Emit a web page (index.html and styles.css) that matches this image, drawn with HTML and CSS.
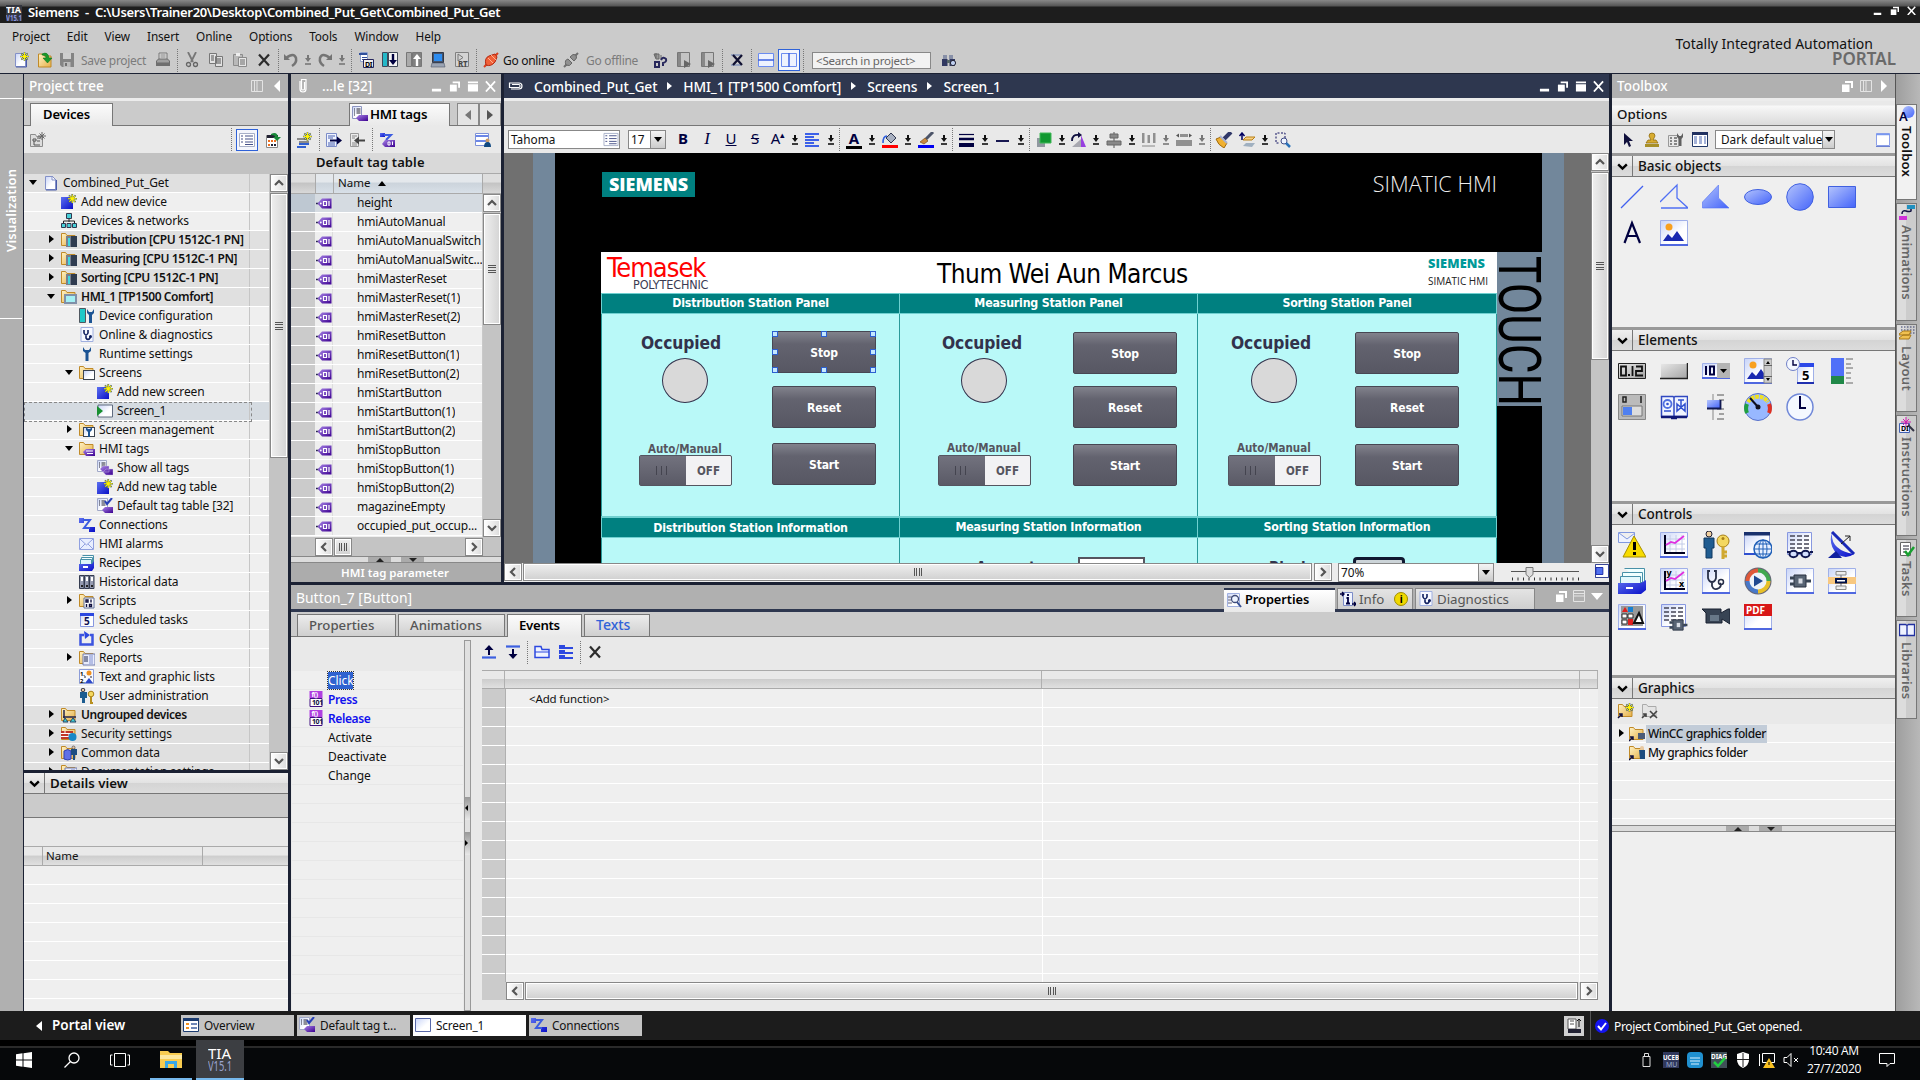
FILE: index.html
```html
<!DOCTYPE html>
<html lang="en">
<head>
<meta charset="utf-8">
<title>Siemens - Combined_Put_Get</title>
<link rel="stylesheet" href="styles.css">
</head>
<body>
<svg class="defs" width="0" height="0">
<defs>
<linearGradient id="gb" x1="0" y1="0" x2="1" y2="1"><stop offset="0" stop-color="#b4c4fc"/><stop offset="1" stop-color="#4464fa"/></linearGradient>
<linearGradient id="gd" x1="0" y1="0" x2="1" y2="1"><stop offset="0" stop-color="#c8d4f8"/><stop offset=".6" stop-color="#fff"/></linearGradient>
<linearGradient id="gf" x1="0" y1="0" x2="1" y2="1"><stop offset="0" stop-color="#fff2c4"/><stop offset="1" stop-color="#e6b048"/></linearGradient>
<linearGradient id="gs" x1="0" y1="0" x2="1" y2="1"><stop offset="0" stop-color="#5c70f0"/><stop offset="1" stop-color="#0a10c8"/></linearGradient>
<linearGradient id="gp" x1="0" y1="0" x2="1" y2="1"><stop offset="0" stop-color="#a884e8"/><stop offset="1" stop-color="#3c0090"/></linearGradient>
<linearGradient id="gg" x1="0" y1="0" x2="1" y2="1"><stop offset="0" stop-color="#e8e8e8"/><stop offset="1" stop-color="#a4a4a4"/></linearGradient>
</defs>
<symbol id="star" viewBox="0 0 10 10"><path d="M5 0v10M0 5h10M1.5 1.5l7 7M8.500 1.500l-7 7" stroke="#47616b" stroke-width="1.800"/><path d="M5 .5v9M.5 5h9M2 2l6 6M8 2l-6 6" stroke="#fff200" stroke-width="1.100"/></symbol>
<symbol id="doc" viewBox="0 0 16 16"><path d="M2.500 1.500h7l3 3v10h-10z" fill="url(#gd)" stroke="#8491c8"/><path d="M9 1l4 4H9z" fill="#fff" stroke="#8491c8"/><path d="M13.500 5v10H3" stroke="#4a5ca8" fill="none"/></symbol>
<symbol id="new" viewBox="0 0 16 16"><use href="#doc"/><use href="#star" x="7" y="0" width="9" height="9"/></symbol>
<symbol id="folder" viewBox="0 0 16 16"><path d="M.5 13.500v-12h4l1.500 2h8v10z" fill="url(#gf)" stroke="#c08a28"/></symbol>
<symbol id="open" viewBox="0 0 16 16"><path d="M1.500 15V2h4l2 2H14v11z" fill="url(#gf)" stroke="#c08a28"/><path d="M5 2q6-3 7 4h3l-4.500 5L6 6h3q0-3-4-3z" fill="#1a9a2a" stroke="#0a6a18" stroke-width=".5"/></symbol>
<symbol id="save" viewBox="0 0 16 16"><path d="M1 1h14v14H3l-2-2z" fill="#848484"/><path d="M4 1h8v6H4z" fill="#cecece"/><path d="M4.500 10h7v5h-7z" fill="#bbb"/><path d="M6 11h2v3H6z" fill="#707070"/></symbol>
<symbol id="print" viewBox="0 0 16 16"><path d="M4 1h8v7H4z" fill="#ddd" stroke="#777"/><path d="M5.500 3h5M5.500 5h5" stroke="#888"/><path d="M1.500 9l2-2h9l2 2v2h-13z" fill="#a0a0a0" stroke="#6c6c6c"/><path d="M1 11h14v3H1z" fill="#6f6f6f"/></symbol>
<symbol id="cut" viewBox="0 0 16 16"><path d="M4 0l5 10M12 0L7 10" stroke="#777" stroke-width="1.800"/><circle cx="4.500" cy="12.500" r="2" fill="none" stroke="#666" stroke-width="1.300"/><circle cx="11.500" cy="12.500" r="2" fill="none" stroke="#666" stroke-width="1.300"/></symbol>
<symbol id="copy" viewBox="0 0 16 16"><path d="M1.500 1.500h7v10h-7zM7.500 4.500h7v10h-7z" fill="#e2e2e2" stroke="#777"/><path d="M3 4h3M3 6h3M3 8h3M9 7h4M9 9h4M9 11h4" stroke="#555"/></symbol>
<symbol id="paste" viewBox="0 0 16 16"><path d="M1.500 2.500h9v11h-9z" fill="#b9b9b9" stroke="#8c8c8c"/><path d="M4 1h4v3H4z" fill="#eee"/><path d="M6.500 5.500h8v9h-8z" fill="#e6e6e6" stroke="#8a8a8a"/><path d="M8 8h5M8 10h5M8 12h5" stroke="#666"/></symbol>
<symbol id="xx" viewBox="0 0 16 16"><path d="M3 2.500l10 11M13 2.500L3 13.500" stroke="#2c2c2c" stroke-width="2.200"/></symbol>
<symbol id="undo" viewBox="0 0 16 16"><path d="M1 2v6h6z" fill="#747474"/><path d="M3 6q8-6 10 0q1 5-4 8" fill="none" stroke="#747474" stroke-width="2.500"/></symbol>
<symbol id="dd" viewBox="0 0 8 12"><path d="M4 1v4" stroke="currentColor" stroke-width="2"/><path d="M1 4h6L4 8z" fill="currentColor"/><path d="M1 10h6" stroke="currentColor" stroke-width="1.600"/></symbol>
<symbol id="dl" viewBox="0 0 16 16"><path d="M.5 .5h5v14h-5z" fill="#24b8c8" stroke="#404858"/><path d="M6.500 .5h9v14h-9z" fill="#f4f4f4" stroke="#404858"/><path d="M11 2v8" stroke="#000040" stroke-width="2.400"/><path d="M7 8h8l-4 5z" fill="#000040"/></symbol>
<symbol id="ul" viewBox="0 0 16 16"><path d="M.5 .5h5v14h-5z" fill="#aaa" stroke="#777"/><path d="M6.500 .5h9v14h-9z" fill="#808080" stroke="#777"/><path d="M11 6v8" stroke="#fff" stroke-width="2.400"/><path d="M7 7h8l-4-5z" fill="#fff"/></symbol>
<symbol id="pc" viewBox="0 0 16 16"><path d="M2.500 .5h11v10h-11z" fill="#46546c" stroke="#303848"/><path d="M4 2h8v7H4z" fill="#2c8cf0"/><path d="M2 11h12l1 4H1z" fill="#9aa4b4" stroke="#505868" stroke-width=".6"/></symbol>
<symbol id="online" viewBox="0 0 16 16"><path d="M1 15l3-3M12 4l3-3" stroke="#d84020" stroke-width="2"/><path d="M3 13Q1 6 6 4l6-2 2 3-2 5q-4 5-9 3z" fill="#f06038" stroke="#b42810"/><path d="M5 6l5 5M8 3l5 5" stroke="#ffb090"/></symbol>
<symbol id="offline" viewBox="0 0 16 16"><path d="M1 15l3-3M12 4l3-3" stroke="#707070" stroke-width="2"/><path d="M3 13q-2-5 2-6l4 4q-2 4-6 2zM7 5q3-4 6-2 2 3-2 6z" fill="#909090" stroke="#666"/></symbol>
<symbol id="acc" viewBox="0 0 16 16"><path d="M4 1v5M2 2h5v5H4zM9 3v4" stroke="#666" fill="#999"/><path d="M3 10h4v5H3zM9 8q2-4 5-1 1 3-3 4v3" stroke="#28285c" stroke-width="2" fill="none"/></symbol>
<symbol id="dev" viewBox="0 0 16 16"><path d="M1.500 .5h12v14h-12z" fill="#c4c4c4" stroke="#777"/><path d="M2 1h3v13H2z" fill="#888"/><path d="M8 8l7 4-7 4z" fill="#666"/></symbol>
<symbol id="cross" viewBox="0 0 16 16"><path d="M2 2h10v2H2zM2 12h10v2H2z" fill="#98a4c0"/><path d="M4 3l9 10M13 3L4 13" stroke="#101030" stroke-width="2.200"/></symbol>
<symbol id="hsplit" viewBox="0 0 16 16"><path d="M.5 1.500h15v13H.5z" fill="#eef2fe" stroke="#6c8cf0"/><path d="M0 8h16" stroke="#3c60e0" stroke-width="1.500"/></symbol>
<symbol id="vsplit" viewBox="0 0 16 16"><path d="M.5 1.500h15v13H.5z" fill="#eef2fe" stroke="#6c8cf0"/><path d="M8 1v14" stroke="#3c60e0" stroke-width="1.500"/></symbol>
<symbol id="find" viewBox="0 0 16 16"><path d="M2 3h4v4H2zM8 3h4v4H8z" fill="#8890a8"/><path d="M1 7h5.500v7H1zM8.500 7H14v7H8.500z" fill="#303860"/><path d="M6 8h3v3H6z" fill="#566"/><circle cx="12" cy="11" r="2.600" fill="#c0d0f0" stroke="#223"/></symbol>
<symbol id="clip" viewBox="0 0 16 16"><path d="M5 3v8q0 3 3 3t3-3V1.500H6.500V11q0 1 1.500 1t1.500-1V4" fill="none" stroke="#fff" stroke-width="1.200"/></symbol>
<symbol id="cols" viewBox="0 0 12 12"><path d="M.5 .5h11v11H.5zM3.500 0v12M6 0v12" fill="none" stroke="#e4e4e4"/></symbol>
<symbol id="wmin" viewBox="0 0 12 12"><path d="M1 9h10v3H1z" fill="#fff"/></symbol>
<symbol id="wres" viewBox="0 0 12 12"><path d="M4 1h8v7h-2V3H4z" fill="#fff"/><path d="M1 4.500h7.500V12H1z" fill="#fff"/></symbol>
<symbol id="wmax" viewBox="0 0 12 12"><path d="M1 1h11v2H1zM1 4h11v8H1z" fill="#fff"/></symbol>
<symbol id="wx" viewBox="0 0 12 12"><path d="M1 1l10 11M11 1L1 12" stroke="#fff" stroke-width="2"/></symbol>
<symbol id="newfold" viewBox="0 0 16 16"><path d="M.5 2.500h5l1 2h6v10H.5z" fill="#ddd" stroke="#8c8c8c"/><path d="M3 7h3v2H3zM7 6h4M7 9h3M4 9v4h6" stroke="#555" fill="none"/><path d="M12 0v8M8 4h8M9.500 1.500l5 5M14.500 1.500l-5 5" stroke="#666"/></symbol>
<symbol id="list" viewBox="0 0 16 16"><path d="M.5 1.500h15v13H.5z" fill="#fff" stroke="#a8b0c8"/><path d="M2 4h2M2 7h2M2 10h2M6 4h8M6 7h8M6 10h8M6 12.500h8" stroke="#445088"/></symbol>
<symbol id="callist" viewBox="0 0 16 16"><path d="M.5 3.500h11v12H.5z" fill="#fff" stroke="#888"/><path d="M1 3h11v3H1z" fill="#223"/><path d="M2 8h2v2H2zM5 8h2v2H5zM8 8h2v2H8zM2 12h2v2H2z" fill="#f07020"/><path d="M5 12h2v2H5zM8 12h2v2H8z" fill="#223"/><path d="M5 2q6-3 7 3h3l-4 4-4-4h2q0-2-4-2z" fill="#1a8a3a"/></symbol>
<symbol id="addnew" viewBox="0 0 16 16"><path d="M0 3h12v12H0z" fill="url(#gs)"/><use href="#star" x="6.500" y="0" width="9.500" height="9.500"/></symbol>
<symbol id="net" viewBox="0 0 16 16"><path d="M8 5v4M2.500 11V8h11v3" stroke="#222" fill="none"/><path d="M5.500 .5h5v5h-5zM.5 10.500h4v4h-4zM6 10.500h4v4H6zM11.500 10.500h4v4h-4z" fill="#48d0d8" stroke="#303850"/></symbol>
<symbol id="plc" viewBox="0 0 16 16"><use href="#folder"/><path d="M5 4h5v11H5z" fill="#788090"/><path d="M7 6h2v8H7z" fill="#40d8e0"/><path d="M10 4h6v11h-6z" fill="#303c50"/></symbol>
<symbol id="hmi" viewBox="0 0 16 16"><use href="#folder"/><path d="M3 5h13v10H3z" fill="#8090a8"/><path d="M5 7h9v6H5z" fill="#a4f0f4"/></symbol>
<symbol id="devcfg" viewBox="0 0 16 16"><path d="M.5 .5h6v14h-6z" fill="#20c8c8" stroke="#505860"/><path d="M8 1v4l2 2v8h3V7l2-2V1l-2 3h-3z" fill="#1c5494"/></symbol>
<symbol id="diag" viewBox="0 0 16 16"><path d="M2 .5h12v14H2z" fill="#f6f8ff" stroke="#a0b0e0"/><path d="M5 3v3q2 4 4 0V3M7 8v3q2 3 4 0V9" fill="none" stroke="#102060" stroke-width="1.600"/><circle cx="11.500" cy="9.500" r="1.500" fill="#102060"/></symbol>
<symbol id="wrench" viewBox="0 0 16 16"><path d="M4 1v4l2.500 2v8h3V7L12 5V1l-2 3H6z" fill="#1c5494"/></symbol>
<symbol id="screens" viewBox="0 0 16 16"><use href="#folder"/><path d="M4 5h12v10H4z" fill="#3c4450"/><path d="M5 6h10v8H5z" fill="url(#gd)"/></symbol>
<symbol id="screen" viewBox="0 0 16 16"><path d="M1 2h14.500v12H1z" fill="url(#gd)" stroke="#606c80"/><path d="M0 3l6 5-6 5z" fill="#189030"/></symbol>
<symbol id="smgmt" viewBox="0 0 16 16"><use href="#screens"/><path d="M7 5v3l2 2v5h2v-5l2-2V5l-2 2H9z" fill="#1c5494"/></symbol>
<symbol id="tag" viewBox="0 0 16 16"><path d="M0 8h5" stroke="#26264e" stroke-width="1.500"/><path d="M1.500 8L6 3h9.500v10H6z" fill="url(#gp)"/><path d="M7.500 6h3v4h-3zM13 5.500v5" fill="none" stroke="#fff" stroke-width="1.200"/><circle cx="4.800" cy="8" r=".9" fill="#fff"/></symbol>
<symbol id="ftag" viewBox="0 0 16 16"><use href="#folder"/><path d="M4 11l3-3h9v7H7z" fill="url(#gp)"/><path d="M7 10h7M8 12.500h6" stroke="#fff"/></symbol>
<symbol id="tags" viewBox="0 0 16 16"><path d="M.5 .5h9v11h-9z" fill="url(#gd)" stroke="#a0a8c8"/><path d="M2 3h1M2 5h1M2 7h1M4.500 3h4M4.500 5h4M4.500 7h4" stroke="#223"/><path d="M3 9l3-3h6v6H6zM6 12l3-3h7v6H9z" fill="url(#gp)" stroke="#d0c4ec" stroke-width=".4"/></symbol>
<symbol id="tagtab" viewBox="0 0 16 16"><path d="M.5 .5h9v12h-9z" fill="url(#gd)" stroke="#8c94c0"/><path d="M2 3h1M2 5h1M2 7h1M2 9h1M4.500 3h4M4.500 5h4M4.500 7h4" stroke="#223"/><path d="M4 12l3-3h9v6H7z" fill="url(#gp)"/></symbol>
<symbol id="deftag" viewBox="0 0 16 16"><path d="M.5 .5h10v12h-10z" fill="url(#gd)" stroke="#a0a8c8"/><path d="M2 3h1M2 5h1M2 7h1M4.500 3h4M4.500 5h4M4.500 7h4" stroke="#223"/><path d="M8 3l2 3 5-6" fill="none" stroke="#2840b8" stroke-width="2"/><path d="M5 12l3-3h8v6H8z" fill="url(#gp)"/></symbol>
<symbol id="conn" viewBox="0 0 16 16"><path d="M0 1h5v5H0zM10 10h6v5h-6z" fill="url(#gs)"/><path d="M4 3h7L5 11h6" fill="none" stroke="#3c5ce0" stroke-width="2"/></symbol>
<symbol id="mail" viewBox="0 0 16 16"><path d="M.5 2.500h14v11H.5z" fill="#e8eeff" stroke="#90a0e0"/><path d="M1 3l6.500 6L14 3M1 13l5-5M14 13L9 8" fill="none" stroke="#90a0e0"/></symbol>
<symbol id="recipe" viewBox="0 0 16 16"><path d="M3.500 .5h11v8M2.500 2.500h11v7h-12z" fill="#f4ffff" stroke="#4890a8"/><path d="M1.500 4.500h11v6h-11z" fill="#ddf4f8" stroke="#4890a8"/><path d="M0 9h13l2-3v7l-2 3H0z" fill="url(#gs)"/><path d="M4 11h5v2H4z" fill="#fff"/></symbol>
<symbol id="hist" viewBox="0 0 16 16"><path d="M.5 1.500h4.500v13H.5zM5.500 1.500H10v13H5.500zM10.500 1.500H15v13h-4.500z" fill="#949ab0" stroke="#343c50"/><path d="M2 3h2v4H2zM7 3h2v4H7zM12 3h2v4h-2z" fill="#fff"/><path d="M2 11h2v2H2zM7 11h2v2H7zM12 11h2v2h-2z" fill="#222"/></symbol>
<symbol id="script" viewBox="0 0 16 16"><use href="#folder"/><path d="M5 5h10v10H5z" fill="#fff" stroke="#60709c"/><path d="M7 7h2v2H7zM12 6.500v3M7.500 11v3M10.500 11.500h2v2h-2z" fill="none" stroke="#101040" stroke-width="1.400"/></symbol>
<symbol id="cycle" viewBox="0 0 16 16"><path d="M5 4H1.500v9.500h12V4H11" fill="none" stroke="#3c54e0" stroke-width="2.500"/><path d="M5 0l6 4-5 4z" fill="#2c48e0"/></symbol>
<symbol id="report" viewBox="0 0 16 16"><use href="#folder"/><path d="M4 4h12v11H4z" fill="#e8ecfc" stroke="#707cb0"/><path d="M5 7h4M5 9h4M5 11h4" stroke="#202850"/><path d="M11 5v9M13 5v9" stroke="#8090d0"/></symbol>
<symbol id="user" viewBox="0 0 16 16"><circle cx="4" cy="2" r="1.800" fill="#e8c8a0" stroke="#334"/><path d="M1 4h7v6H6v5H3v-5H1z" fill="#1c5c90"/><circle cx="12" cy="6" r="2.800" fill="#f4d860" stroke="#a88018"/><path d="M12 8v7h2" stroke="#b89020" stroke-width="2" fill="none"/></symbol>
<symbol id="ungr" viewBox="0 0 16 16"><use href="#folder"/><path d="M3 3v8M2 10h13" stroke="#24244c" stroke-width="1.500"/><path d="M4 11l-2 4h5zM12 11l-3 4h6z" fill="#40d0d8" stroke="#246"/></symbol>
<symbol id="sec" viewBox="0 0 16 16"><use href="#folder"/><path d="M0 5h12v8H0z" fill="#c03828"/><path d="M0 7.500h12M0 10.500h12M4 5v3M8 8v3" stroke="#fff"/><circle cx="11.500" cy="11" r="4" fill="#1888c8"/></symbol>
<symbol id="common" viewBox="0 0 16 16"><use href="#folder"/><path d="M3 6q4-3 7 0v8q-3 2-7 0z" fill="#6070e8" stroke="#3040b0"/><circle cx="12.500" cy="2.500" r="1.500" fill="#e8c8a0" stroke="#334" stroke-width=".6"/><path d="M10 4h6v6h-2v5h-2v-5h-2z" fill="#1c4c80"/></symbol>
<symbol id="bars" viewBox="0 0 16 16"><path d="M1 6h10v2H1zM3 9h10v2H3z" fill="#8a8a8a"/><path d="M3 11h10v2H3zM1 14h9v2H1z" fill="#3060d0"/><use href="#star" x="7" y="0" width="9" height="9"/></symbol>
<symbol id="exp" viewBox="0 0 16 16"><path d="M.5 1.500h10v13H.5z" fill="#f0f4ff" stroke="#7c8cc8"/><path d="M2 4h7M2 6h5M2 11h7M2 13h7" stroke="#4860b0"/><path d="M4 8.500h8" stroke="#000040" stroke-width="2"/><path d="M11 4.500v8l5-4z" fill="#000040"/></symbol>
<symbol id="imp" viewBox="0 0 16 16"><path d="M.5 1.500h8v13h-8z" fill="#ececec" stroke="#999"/><path d="M2 4h5M2 6h3M2 11h5M2 13h5" stroke="#888"/><path d="M8 8.500h7" stroke="#444" stroke-width="2"/><path d="M9 4.500v8l-5-4z" fill="#444"/></symbol>
<symbol id="info" viewBox="0 0 16 16"><path d="M3.500 1.500h9v13h-9z" fill="#f0f4ff" stroke="#7c8cc8"/><path d="M8 3v2M6.500 7H8v5M6 12.500h4" stroke="#000040" stroke-width="1.800" fill="none"/><path d="M0 3h4M2 1l2 2-2 2M12 13h4M14 11l2 2-2 2" stroke="#000040" stroke-width="1.400" fill="none"/></symbol>
<symbol id="propi" viewBox="0 0 16 16"><path d="M1.500 1.500h12v13h-12z" fill="url(#gd)" stroke="#a0b0e0"/><path d="M2 5h4M2 8h3M2 11h4" stroke="#667"/><circle cx="9" cy="7" r="3.500" fill="#eef4ff" stroke="#404c78" stroke-width="1.300"/><path d="M11 10l4 5" stroke="#385090" stroke-width="2"/></symbol>
<symbol id="conntag" viewBox="0 0 16 16"><path d="M1 1h5v4H1z" fill="url(#gs)"/><path d="M5 3h7l-5 5" fill="none" stroke="#3c5ce0" stroke-width="2"/><path d="M3 12l3-4h10v7H6z" fill="url(#gp)"/><path d="M9 10h2v3H9zM13.500 9.500V13" stroke="#fff" fill="none"/></symbol>
<symbol id="winusr" viewBox="0 0 16 16"><path d="M.5 1.500h13v12H.5z" fill="#fff" stroke="#7c90d8"/><path d="M1 4h12M1 9h12" stroke="#3c60e0" stroke-width="1.500"/><circle cx="12.500" cy="8.500" r="2" fill="#c89868"/><path d="M9 15q0-5 3.500-5T16 15z" fill="#104880"/></symbol>
<symbol id="fill" viewBox="0 0 16 16"><path d="M4 6l5-5 5 5-5 5z" fill="#a8b0c0" stroke="#303850"/><path d="M1 11q0-7 4-7" fill="none" stroke="#3060e0" stroke-width="1.600"/><path d="M0 13h16v3H0z" fill="red"/></symbol>
<symbol id="brush" viewBox="0 0 16 16"><path d="M15 0L8 7" stroke="#4c5468" stroke-width="3"/><path d="M2 10l5-4 3 3-4 3z" fill="#c88840" stroke="#684010" stroke-width=".6"/><path d="M0 13h16v3H0z" fill="#0000f0"/></symbol>
<symbol id="alignl" viewBox="0 0 16 16"><path d="M0 2h14M0 5h9M0 8h14M0 11h9M0 14h14" stroke="#3c60e8" stroke-width="1.800"/></symbol>
<symbol id="lines" viewBox="0 0 16 16"><path d="M0 2.500h15" stroke="#000040" stroke-width="1.200"/><path d="M0 7h15" stroke="#000040" stroke-width="2.500"/><path d="M0 13h15" stroke="#000040" stroke-width="4"/></symbol>
<symbol id="line1" viewBox="0 0 16 16"><path d="M1 9h13" stroke="#000040" stroke-width="1.800"/></symbol>
<symbol id="sq2" viewBox="0 0 16 16"><path d="M1 6h8v9H1z" fill="#9098a0"/><path d="M4 1h11v10H4z" fill="#109830" stroke="#40b858"/></symbol>
<symbol id="rot" viewBox="0 0 16 16"><path d="M1 15h9V7z" fill="#a8a8b0"/><path d="M10 15V3l5 12z" fill="#9840e0"/><path d="M1 9q0-7 7-6" fill="none" stroke="#101040" stroke-width="1.800"/><path d="M7 0l4 3-4 3z" fill="#101040"/></symbol>
<symbol id="alc" viewBox="0 0 16 16"><path d="M8 0v16" stroke="#555"/><path d="M4 2h8v4H4zM1 9h14v4H1z" fill="#888" stroke="#666"/></symbol>
<symbol id="dist" viewBox="0 0 16 16"><path d="M1 1h2.500v10H1zM6.500 3H9v8H6.500zM12 1h2.500v10H12z" fill="#909090"/><path d="M1 14h13" stroke="#888"/></symbol>
<symbol id="samew" viewBox="0 0 16 16"><path d="M4 2h8v3H4zM0 8h16v6H0z" fill="#909090"/><path d="M0 3.500l3-2v4zM16 3.500l-3-2v4z" fill="#555"/></symbol>
<symbol id="pbrush" viewBox="0 0 16 16"><path d="M15 0L8 7" stroke="#303868" stroke-width="4"/><path d="M0 7l5-2 6 6-3 5q-6-3-8-9z" fill="#f0b030" stroke="#a06c10"/><path d="M4 4l7 7" stroke="#a8b0d0" stroke-width="2"/></symbol>
<symbol id="layer" viewBox="0 0 16 16"><path d="M3 8V2M.5 4L3 1l2.500 3" stroke="#000060" stroke-width="1.500" fill="none"/><path d="M4 8l3-3h9l-3 3z" fill="#f8d080" stroke="#b88018"/><path d="M4 14l3-3h9l-3 4z" fill="#a0b0c0"/></symbol>
<symbol id="zoomsel" viewBox="0 0 16 16"><path d="M10 6V1H1v10h4" fill="none" stroke="#101060" stroke-dasharray="2 1.500"/><circle cx="9" cy="9" r="3" fill="#eef4ff" stroke="#404c88"/><path d="M11 11l4 4" stroke="#2870b8" stroke-width="2.500"/></symbol>
<symbol id="arrow" viewBox="0 0 16 16"><path d="M4 1v12l3-3 2 5 2-1-2-5h4z" fill="#10103c"/></symbol>
<symbol id="stamp" viewBox="0 0 16 16"><path d="M5 4q0-3 3-3t3 3l-2 4h3l2 3H2l2-3h3z" fill="#d8ac30" stroke="#906c10" stroke-width=".8"/><path d="M1 12h14v3H1z" fill="#a89028"/></symbol>
<symbol id="settings" viewBox="0 0 16 16"><path d="M.5 3.500h10v11H.5z" fill="#e8e8e8" stroke="#999"/><path d="M2 6h2M6 6h3M2 9h2M6 9h3M2 12h2M6 12h3" stroke="#666" stroke-width="1.500"/><path d="M9 1v4l2 2v7h2.500V7L15 5V1l-2 3h-2z" fill="#606060"/></symbol>
<symbol id="table" viewBox="0 0 16 16"><path d="M.5 1.500h15v13H.5z" fill="#fff" stroke="#203868"/><path d="M0 0h16v3H0z" fill="#203060"/><path d="M2 5h3M2 7h3M2 9h3M2 11h3M7 5h3M7 7h3M7 9h3M7 11h3M12 5h2M12 7h2M12 9h2M12 11h2" stroke="#4864b0"/></symbol>
<symbol id="win" viewBox="0 0 16 16"><path d="M1.500 1.500h13v12h-13z" fill="#fff" stroke="#8ca0e8"/><path d="M1 2.500h14" stroke="#7898f0" stroke-width="1.500"/><path d="M1 14.500h14" stroke="#6c80d0"/></symbol>
<symbol id="over" viewBox="0 0 16 16"><path d="M.5 1.500h15v13H.5z" fill="#fff" stroke="#1c3c70"/><path d="M0 1h16v3H0z" fill="#1c3c70"/><path d="M3 6h3v2H3zM3 10h3v2H3z" fill="#f09020"/><path d="M8 7h6M8 11h6" stroke="#4060a0" stroke-width="1.500"/></symbol>
<symbol id="scrd" viewBox="0 0 16 16"><path d="M.5 1.500h15v13H.5z" fill="url(#gd)" stroke="#5868a8"/></symbol>
<symbol id="chev" viewBox="0 0 12 12"><path d="M2 4l4 4 4-4" fill="none" stroke="currentColor" stroke-width="2.200"/></symbol>
<symbol id="mup" viewBox="0 0 16 16"><path d="M8 11V4" stroke="#000040" stroke-width="2"/><path d="M3.500 6L8 1l4.500 5z" fill="#000040"/><path d="M1 13.500h14" stroke="#3c60e0" stroke-width="2.200"/></symbol>
<symbol id="mdn" viewBox="0 0 16 16"><path d="M8 5v7" stroke="#000040" stroke-width="2"/><path d="M3.500 10L8 15l4.500-5z" fill="#000040"/><path d="M1 2.500h14" stroke="#3c60e0" stroke-width="2.200"/></symbol>
<symbol id="grp" viewBox="0 0 16 16"><path d="M1 2.500h6l1 3h7v8H1z" fill="#f0f4ff" stroke="#2c48e0" stroke-width="1.500"/><path d="M1 8h14" stroke="#2c48e0"/></symbol>
<symbol id="ugrp" viewBox="0 0 16 16"><path d="M1 1h6v2h8v2H1zM1 6h6v2h8v2H1zM1 11h6v2h8v2H1z" fill="#2c48e0"/></symbol>
<!-- toolbox, 28 x 28 -->
<symbol id="t-line" viewBox="0 0 28 28"><path d="M3 25L25 3" stroke="#4060f0" stroke-width="1.300"/></symbol>
<symbol id="t-poly" viewBox="0 0 28 28"><path d="M0 19L17 2v13l11 10H1" fill="none" stroke="#5070f4" stroke-width="1.300"/></symbol>
<symbol id="t-pgon" viewBox="0 0 28 28"><path d="M.5 19L16.500 2v13L27 25H.5z" fill="url(#gb)" stroke="#5070f4" stroke-width=".6"/></symbol>
<symbol id="t-ell" viewBox="0 0 28 28"><ellipse cx="14" cy="14" rx="13.500" ry="7.500" fill="url(#gb)" stroke="#4060e0"/></symbol>
<symbol id="t-circ" viewBox="0 0 28 28"><circle cx="14" cy="14" r="13.300" fill="url(#gb)" stroke="#4060e0"/></symbol>
<symbol id="t-rect" viewBox="0 0 28 28"><path d="M.5 3.500h27v21H.5z" fill="url(#gb)" stroke="#4060e0"/></symbol>
<symbol id="t-A" viewBox="0 0 28 28"><path d="M6.500 24L14 4l8 20M9 17h10" fill="none" stroke="#000040" stroke-width="2.200"/></symbol>
<symbol id="t-pic" viewBox="0 0 28 28"><path d="M.5 1.500h27v24H.5z" fill="url(#gd)" stroke="#a0b0e8"/><path d="M0 25h28v2H0z" fill="#5068e0"/><circle cx="9" cy="8" r="3.500" fill="#f8a020"/><path d="M3 22l5-7 4 4 5-7 7 10z" fill="#1828b0"/></symbol>
<symbol id="t-io" viewBox="0 0 28 28"><path d="M.5 6.500h27v15H.5z" fill="url(#gg)" stroke="#222"/><path d="M3 9.500h5v9H3zM14.500 9v10M18 9.500h6v4.500h-6v4.500h7M10 18h2" fill="none" stroke="#111" stroke-width="1.800"/></symbol>
<symbol id="t-btn" viewBox="0 0 28 28"><path d="M.5 6.500h27v15H.5z" fill="url(#gg)" stroke="#eee"/><path d="M0 21.500h27.500V6" fill="none" stroke="#222" stroke-width="1.500"/></symbol>
<symbol id="t-sym" viewBox="0 0 28 28"><path d="M.5 6.500h27v14H.5z" fill="url(#gd)" stroke="#a0b0e8"/><path d="M0 21h28" stroke="#5068e0" stroke-width="2"/><path d="M15 6h13v15H15z" fill="#b4b4b4"/><path d="M18 12h7l-3.500 4z"/><path d="M4 9v9M8 9.500h4v8H8z" fill="none" stroke="#000040" stroke-width="2"/></symbol>
<symbol id="t-gio" viewBox="0 0 28 28"><use href="#t-pic"/><path d="M20 2h8v24h-8z" fill="#ccc" stroke="#888"/><path d="M22 7h4l-2-3zM22 21h4l-2 3z"/><path d="M20 8.500h8M20 19.500h8" stroke="#666"/></symbol>
<symbol id="t-bar" viewBox="0 0 28 28"><path d="M3 1h13v18H3z" fill="#5070f8"/><path d="M3 19h13v8H3z" fill="#208848"/><path d="M18 2h7M18 7h5M18 11h7M18 16h5M18 21h5M18 26h7" stroke="#666"/></symbol>
<symbol id="t-sw" viewBox="0 0 28 28"><path d="M.5 1.500h27v25H.5z" fill="#bbb" stroke="#888"/><path d="M5 4h3v5H5zM23 3v7" stroke="#222" stroke-width="1.500" fill="none"/><path d="M4 13h20v10H4z" fill="#ddd" stroke="#777"/><path d="M5 14h9v8H5z" fill="#5080f0"/></symbol>
<symbol id="t-lib" viewBox="0 0 28 28"><path d="M1.500 3.500H13l1 1 1-1h12.500v20H1.500zM14 4v20" fill="#f0f4ff" stroke="#3048c0" stroke-width="1.500"/><circle cx="7.500" cy="11" r="4" fill="none" stroke="#5070e0" stroke-width="1.800"/><circle cx="7.500" cy="11" r="1.300" fill="#3050d0"/><path d="M4 18h7M17 11l8 7v-7l-8 7zM21 14V7M18 7h6" fill="none" stroke="#3050d0" stroke-width="1.500"/><path d="M1 24h26M11 25h6" stroke="#101878" stroke-width="2.500"/></symbol>
<symbol id="t-sl" viewBox="0 0 28 28"><path d="M11 1v26" stroke="#bbb" stroke-width="2"/><path d="M15 2h7M17 7h5M15 16h7M17 21h5M15 26h7" stroke="#555"/><path d="M5 7h13v8H5z" fill="url(#gb)"/><path d="M5 15.500h13.500V7" fill="none" stroke="#101850" stroke-width="1.800"/></symbol>
<symbol id="t-gau" viewBox="0 0 28 28"><circle cx="14" cy="14" r="13.500" fill="#98b8ff" stroke="#5870c8"/><path d="M3 20A12 12 0 0 1 3 11" fill="none" stroke="#20a040" stroke-width="4"/><path d="M4 9A12 12 0 0 1 24 9" fill="none" stroke="#f0e020" stroke-width="4" stroke-dasharray="3.500 1"/><path d="M25 11A12 12 0 0 1 25 20" fill="none" stroke="#e03020" stroke-width="4"/><path d="M6 5l8 9" stroke="#101020" stroke-width="2"/><circle cx="14" cy="14" r="2.500" fill="#101020"/></symbol>
<symbol id="t-clk" viewBox="0 0 28 28"><circle cx="14" cy="14" r="13" fill="#f4f8ff" stroke="#7088d8" stroke-width="1.500"/><path d="M14 3v12h6" fill="none" stroke="#000040" stroke-width="2"/></symbol>
<symbol id="t-alm" viewBox="0 0 28 28"><path d="M.5 1.500h16v10H.5zM1 2l8 6 8-6" fill="#eef2ff" stroke="#8098e0"/><path d="M16 5l12 21H5z" fill="#f8dc00" stroke="#a89000"/><path d="M16.500 11v8M16.500 21v3" stroke="#000" stroke-width="3"/></symbol>
<symbol id="t-frame" viewBox="0 0 28 28"><path d="M.5 1.500h27v24H.5z" fill="url(#gd)" stroke="#a0b0e8"/><path d="M0 26h28" stroke="#5068e0" stroke-width="2"/></symbol>
<symbol id="t-trend" viewBox="0 0 28 28"><use href="#t-frame"/><path d="M10 4v18M16 4v18M22 4v18M5 8h20M5 13h20M5 18h20" stroke="#c4cce8"/><path d="M5 4v18h20" fill="none" stroke="#000020" stroke-width="2"/><path d="M6 14l5-3 4 1 9-7" fill="none" stroke="#e030e0" stroke-width="1.800"/></symbol>
<symbol id="t-usr" viewBox="0 0 28 28"><circle cx="7" cy="3" r="3" fill="#f0d0a0" stroke="#223"/><path d="M2 7h10v10h-2v10H4V17H2z" fill="#205c90" stroke="#103860"/><circle cx="21" cy="10" r="6" fill="#f4d860" stroke="#a88018"/><circle cx="21" cy="7.500" r="1.500" fill="#a88018"/><path d="M21 15v13M22 21h3M22 25h3" stroke="#d0a830" stroke-width="3"/></symbol>
<symbol id="t-web" viewBox="0 0 28 28"><path d="M.5 2.500h25v20H.5z" fill="url(#gd)" stroke="#8898d0"/><path d="M0 1h26v3.500H0z" fill="#18306c"/><path d="M0 23h18" stroke="#3050d0" stroke-width="2"/><circle cx="19" cy="18" r="9" fill="#e8f0ff" stroke="#2060b8" stroke-width="1.500"/><ellipse cx="19" cy="18" rx="4" ry="9" fill="none" stroke="#2060b8"/><path d="M10 18h18M19 9v18M12 13h14M12 23h14" stroke="#2060b8"/></symbol>
<symbol id="t-rec" viewBox="0 0 28 28"><path d="M1.500 1.500h24v22h-24z" fill="url(#gd)" stroke="#8898e0"/><path d="M4 5h19M4 9h19M4 13h19M4 17h19" stroke="#445" stroke-width="1.500" stroke-dasharray="5 2"/></symbol>
<symbol id="t-watch" viewBox="0 0 28 28"><use href="#t-rec"/><path d="M1 21h3M11.500 22h4M24 21h3" stroke="#101850" stroke-width="2"/><ellipse cx="7.500" cy="23" rx="4" ry="3.200" fill="#d4e0ff" stroke="#101850" stroke-width="2"/><ellipse cx="19.500" cy="23" rx="4" ry="3.200" fill="#d4e0ff" stroke="#101850" stroke-width="2"/></symbol>
<symbol id="t-sat" viewBox="0 0 28 28"><path d="M4 1q-2 18 22 22q-8 6-17 0Q0 14 4 1z" fill="url(#gs)"/><path d="M4 1l22 22" stroke="#1828b8" stroke-width="3"/><path d="M13 13l9-8M17 5h5v5" fill="none" stroke="#222"/><path d="M8 20l-8 7h14z" fill="#1020a0"/></symbol>
<symbol id="t-rcp" viewBox="0 0 28 28"><path d="M6.500 1.500h20v15M4.500 5.500h20v10h-20z" fill="#f0ffff" stroke="#4890a8"/><path d="M2.500 9.500h20v10h-20z" fill="#e4f8fc" stroke="#4890a8"/><path d="M0 16h23l5-3v10l-5 4H0z" fill="url(#gs)"/><path d="M8 20h7v2H8z" fill="#fff"/></symbol>
<symbol id="t-diag" viewBox="0 0 28 28"><use href="#t-frame"/><path d="M8 4H6v7q1 4 4 4t4-4V4h-2M10 15v4q2 5 7 2 3-2 1-5" fill="none" stroke="#283048" stroke-width="1.800"/><circle cx="19" cy="15" r="2.500" fill="none" stroke="#283048" stroke-width="1.500"/></symbol>
<symbol id="t-media" viewBox="0 0 28 28"><circle cx="14" cy="14" r="13.500" fill="#667"/><path d="M14 14V1.500A12.500 12.500 0 0 1 26.500 14z" fill="#40a850"/><path d="M14 14h12.500A12.500 12.500 0 0 1 14 26.500z" fill="#e8c028"/><path d="M14 14v12.500A12.500 12.500 0 0 1 1.500 14z" fill="#4878c8"/><path d="M14 14H1.500A12.500 12.500 0 0 1 14 1.500z" fill="#e05838"/><circle cx="14" cy="14" r="8.500" fill="#eef2f8"/><path d="M10 8.500v11l9-5.500z" fill="#204890"/></symbol>
<symbol id="t-plug" viewBox="0 0 28 28"><path d="M8 8h12v12H8z" fill="#586474" stroke="#283040"/><path d="M4 9.500h4v3H4zM4 15.500h4v3H4zM20 12.500h5v3h-5z" fill="#384454"/><path d="M12.500 11.500h4v5h-4z" fill="#d8dce4"/></symbol>
<symbol id="t-sys" viewBox="0 0 28 28"><use href="#t-frame"/><use href="#t-plug"/></symbol>
<symbol id="t-graph" viewBox="0 0 28 28"><use href="#t-frame"/><path d="M0 10h28v7H0z" fill="#f8c880"/><path d="M13 4v19" stroke="#667"/><path d="M8 4.500h10v3.500H8zM8 19h10v3.500H8z" fill="#eee" stroke="#888"/><path d="M8 12h10v3.500H8z" fill="#fff" stroke="#001048" stroke-width="2"/></symbol>
<symbol id="t-smart" viewBox="0 0 28 28"><use href="#t-frame"/><path d="M3 3h22v20H3z" fill="#999"/><path d="M4 9l3-5 3 5z" fill="#e02020"/><path d="M10 4h5v5h-5z" fill="#1880d0"/><path d="M4 11h5v4H4zM10 11h5v4h-5zM4 17h5v4H4z" fill="#fff" stroke="#333"/><path d="M10 16h5v6h-5z" fill="#e02020"/><path d="M16 20l5-10 4 10z" fill="#fff" stroke="#111" stroke-width="2"/></symbol>
<symbol id="t-recv" viewBox="0 0 28 28"><use href="#t-rec"/><use href="#t-plug" x="6" y="10" width="24" height="24"/></symbol>
<symbol id="t-cam" viewBox="0 0 28 28"><path d="M0 6h19v4l7-4h2v15l-8-5v4H4V10z" fill="#384454" stroke="#182030"/><path d="M8 12h9v6H8z" fill="#687888"/></symbol>
</svg>

<header class="title"><svg class="ic" viewBox="0 0 16 16"><rect width="16" height="16" fill="#33363f"/><text x="0" y="7.500" class="t8 bo" fill="#fff" textLength="15" lengthAdjust="spacingAndGlyphs">TIA</text><text x="0" y="15.500" class="t8 bo" fill="#8894e0" textLength="16" lengthAdjust="spacingAndGlyphs">V15.1</text></svg>
<b>Siemens&nbsp; -&nbsp; C:\Users\Trainer20\Desktop\Combined_Put_Get\Combined_Put_Get</b>
<span class="wb"><svg><use href="#wmin"/></svg><svg><use href="#wres"/></svg><svg><use href="#wx"/></svg></span></header>

<section class="head">
<div class="hl">
<nav class="menu"><span>Project</span><span>Edit</span><span>View</span><span>Insert</span><span>Online</span><span>Options</span><span>Tools</span><span>Window</span><span>Help</span></nav>
<div class="tb main">
<svg class="s24"><use href="#new"/></svg><svg class="s24"><use href="#open"/></svg><svg class="s20"><use href="#save"/></svg><span class="dis w74">Save project</span><svg class="s24"><use href="#print"/></svg><i class="sep"></i>
<svg class="s24"><use href="#cut"/></svg><svg class="s24"><use href="#copy"/></svg><svg class="s24"><use href="#paste"/></svg><svg class="s24"><use href="#xx"/></svg><i class="sep"></i>
<svg class="s20"><use href="#undo"/></svg><svg class="s14 dim"><use href="#dd"/></svg><svg class="s20 flip"><use href="#undo"/></svg><svg class="s14 dim"><use href="#dd"/></svg><i class="sep"></i>
<svg class="s24" viewBox="0 0 16 16"><path d="M2.500 .5h7v9h-7z" fill="#fff" stroke="#8ca0cc"/><path d="M1 1h8v2H1zM4 5h5v1H4zM4 7h5v1H4z" fill="#30509c"/><path d="M5.500 7.500h10v8h-10z" fill="#eee" stroke="#24245c"/><text x="7" y="14.500" class="t7 bo">DI</text></svg><svg class="s24"><use href="#dl"/></svg><svg class="s24"><use href="#ul"/></svg><svg class="s24"><use href="#pc"/></svg><svg class="s24" viewBox="0 0 16 16"><path d="M1.500 .5h13v14h-13z" fill="#d4d4d4" stroke="#808080"/><path d="M4 2v7l5-3.500z" fill="none" stroke="#777"/><text x="4" y="15" class="t8 bo" fill="#444">RT</text></svg><i class="sep"></i>
<svg class="s24"><use href="#online"/></svg><span class="w58">Go online</span><svg class="s22"><use href="#offline"/></svg><span class="dis w66">Go offline</span>
<svg class="s24"><use href="#acc"/></svg><svg class="s24"><use href="#dev"/></svg><svg class="s24"><use href="#dev"/></svg><i class="sep"></i><svg class="s24"><use href="#cross"/></svg><i class="sep"></i>
<svg class="s24"><use href="#hsplit"/></svg><svg class="boxed bx2"><use href="#vsplit"/></svg><i class="sep"></i><span class="search">&lt;Search in project&gt;</span><svg class="s24"><use href="#find"/></svg>
</div></div>
<div class="brand"><div>Totally Integrated Automation</div><b>PORTAL</b></div>
</section>

<main class="work">
<aside class="vis"><div>Visualization</div></aside>

<section class="left">
<div class="ph"><span>Project tree</span><svg class="sm"><use href="#cols"/></svg><i class="tl"></i></div>
<div class="tabs"><span class="tab on dv">Devices</span></div>
<div class="tb"><svg class="s28"><use href="#newfold"/></svg><i class="grow"></i><i class="sep"></i><svg class="boxed"><use href="#list"/></svg><svg class="s28"><use href="#callist"/></svg></div>
<div class="gap"></div>
<div class="treew">
<div class="tree">
<div class="row g"><i class="tw d"></i><svg><use href="#doc"/></svg>Combined_Put_Get</div>
<div class="row l1"><i class="tw"></i><svg><use href="#addnew"/></svg>Add new device</div>
<div class="row l1"><i class="tw"></i><svg><use href="#net"/></svg>Devices &amp; networks</div>
<div class="row l1 g b"><i class="tw r"></i><svg><use href="#plc"/></svg>Distribution [CPU 1512C-1 PN]</div>
<div class="row l1 g b"><i class="tw r"></i><svg><use href="#plc"/></svg>Measuring [CPU 1512C-1 PN]</div>
<div class="row l1 g b"><i class="tw r"></i><svg><use href="#plc"/></svg>Sorting [CPU 1512C-1 PN]</div>
<div class="row l1 g b"><i class="tw d"></i><svg><use href="#hmi"/></svg>HMI_1 [TP1500 Comfort]</div>
<div class="row l2"><i class="tw"></i><svg><use href="#devcfg"/></svg>Device configuration</div>
<div class="row l2"><i class="tw"></i><svg><use href="#diag"/></svg>Online &amp; diagnostics</div>
<div class="row l2"><i class="tw"></i><svg><use href="#wrench"/></svg>Runtime settings</div>
<div class="row l2"><i class="tw d"></i><svg><use href="#screens"/></svg>Screens</div>
<div class="row l3"><i class="tw"></i><svg><use href="#addnew"/></svg>Add new screen</div>
<div class="row l3 sel"><i class="tw"></i><svg><use href="#screen"/></svg>Screen_1</div>
<div class="row l2"><i class="tw r"></i><svg><use href="#smgmt"/></svg>Screen management</div>
<div class="row l2"><i class="tw d"></i><svg><use href="#ftag"/></svg>HMI tags</div>
<div class="row l3"><i class="tw"></i><svg><use href="#tags"/></svg>Show all tags</div>
<div class="row l3"><i class="tw"></i><svg><use href="#addnew"/></svg>Add new tag table</div>
<div class="row l3"><i class="tw"></i><svg><use href="#deftag"/></svg>Default tag table [32]</div>
<div class="row l2"><i class="tw"></i><svg><use href="#conn"/></svg>Connections</div>
<div class="row l2"><i class="tw"></i><svg><use href="#mail"/></svg>HMI alarms</div>
<div class="row l2"><i class="tw"></i><svg><use href="#recipe"/></svg>Recipes</div>
<div class="row l2"><i class="tw"></i><svg><use href="#hist"/></svg>Historical data</div>
<div class="row l2"><i class="tw r"></i><svg><use href="#script"/></svg>Scripts</div>
<div class="row l2"><i class="tw"></i><svg viewBox="0 0 16 16"><path d="M1.500 1.500h13v13h-13z" fill="url(#gd)" stroke="#8898e0"/><path d="M1 1h14v3H1z" fill="#2c48e0"/><text x="5" y="13" class="t10 bo" fill="#101050">5</text></svg>Scheduled tasks</div>
<div class="row l2"><i class="tw"></i><svg><use href="#cycle"/></svg>Cycles</div>
<div class="row l2"><i class="tw r"></i><svg><use href="#report"/></svg>Reports</div>
<div class="row l2"><i class="tw"></i><svg viewBox="0 0 16 16"><path d="M.5 .5h14v14H.5z" fill="#f8faff" stroke="#8c9cd8"/><text x="1" y="7" class="t6 bo">1.</text><text x="1" y="14" class="t6 bo">2.</text><circle cx="10" cy="4" r="2.500" fill="#f09020"/><path d="M6 14l4-5 4 5z" fill="#2c48c8"/><path d="M5 8h2M11 8h2" stroke="#223"/></svg>Text and graphic lists</div>
<div class="row l2"><i class="tw"></i><svg><use href="#user"/></svg>User administration</div>
<div class="row l1 g b"><i class="tw r"></i><svg><use href="#ungr"/></svg>Ungrouped devices</div>
<div class="row l1 g"><i class="tw r"></i><svg><use href="#sec"/></svg>Security settings</div>
<div class="row l1 g"><i class="tw r"></i><svg><use href="#common"/></svg>Common data</div>
<div class="row l1 g"><i class="tw r"></i><svg><use href="#report"/></svg>Documentation settings</div>
</div>
<div class="vs"><i class="sbtn up"><svg><use href="#chev"/></svg></i><i class="thumb t265"><u></u></i><i class="grow"></i><i class="sbtn"><svg><use href="#chev"/></svg></i></div>
</div>
<div class="sec first"><i><svg><use href="#chev"/></svg></i><b>Details view</b></div>
<div class="dgap"></div><div class="dtb"></div>
<div class="thead dth"><span></span><span>Name</span><span></span></div>
<div class="lined grow"></div>
</section>

<section class="tagp">
<div class="ph"><svg class="clip"><use href="#clip"/></svg><span class="ell">...le [32]</span><svg class="wbi"><use href="#wmin"/></svg><svg class="wbi"><use href="#wres"/></svg><svg class="wbi"><use href="#wmax"/></svg><svg class="wbi"><use href="#wx"/></svg></div>
<div class="tabs"><span class="tab on tg"><svg><use href="#tagtab"/></svg>HMI tags</span><span class="nav"><i class="tl"></i></span><span class="nav last"><i class="tr"></i></span></div>
<div class="tb tgb"><svg class="s26"><use href="#bars"/></svg><i class="sep"></i><svg class="s24"><use href="#exp"/></svg><svg class="s24"><use href="#imp"/></svg><i class="sep"></i><svg class="s24"><use href="#conntag"/></svg><i class="grow"></i><svg class="s36"><use href="#winusr"/></svg></div>
<div class="dtt">Default tag table</div>
<div class="tgrid">
<div class="th"></div><div class="th bl"></div><div class="th bl nm">Name <i class="asc"></i></div><div class="th bl"></div>
<div class="tags">
<div class="tr0 hl0"><i></i><svg><use href="#tag"/></svg><span>height</span></div>
<div class="tr0"><i></i><svg><use href="#tag"/></svg><span>hmiAutoManual</span></div>
<div class="tr0"><i></i><svg><use href="#tag"/></svg><span>hmiAutoManualSwitch</span></div>
<div class="tr0"><i></i><svg><use href="#tag"/></svg><span>hmiAutoManualSwitc...</span></div>
<div class="tr0"><i></i><svg><use href="#tag"/></svg><span>hmiMasterReset</span></div>
<div class="tr0"><i></i><svg><use href="#tag"/></svg><span>hmiMasterReset(1)</span></div>
<div class="tr0"><i></i><svg><use href="#tag"/></svg><span>hmiMasterReset(2)</span></div>
<div class="tr0"><i></i><svg><use href="#tag"/></svg><span>hmiResetButton</span></div>
<div class="tr0"><i></i><svg><use href="#tag"/></svg><span>hmiResetButton(1)</span></div>
<div class="tr0"><i></i><svg><use href="#tag"/></svg><span>hmiResetButton(2)</span></div>
<div class="tr0"><i></i><svg><use href="#tag"/></svg><span>hmiStartButton</span></div>
<div class="tr0"><i></i><svg><use href="#tag"/></svg><span>hmiStartButton(1)</span></div>
<div class="tr0"><i></i><svg><use href="#tag"/></svg><span>hmiStartButton(2)</span></div>
<div class="tr0"><i></i><svg><use href="#tag"/></svg><span>hmiStopButton</span></div>
<div class="tr0"><i></i><svg><use href="#tag"/></svg><span>hmiStopButton(1)</span></div>
<div class="tr0"><i></i><svg><use href="#tag"/></svg><span>hmiStopButton(2)</span></div>
<div class="tr0"><i></i><svg><use href="#tag"/></svg><span>magazineEmpty</span></div>
<div class="tr0"><i></i><svg><use href="#tag"/></svg><span>occupied_put_occup...</span></div>
</div>
<div class="vs"><i class="sbtn up"><svg><use href="#chev"/></svg></i><i class="thumb t112"><u></u></i><i class="grow"></i><i class="sbtn"><svg><use href="#chev"/></svg></i></div>
</div>
<div class="hs ths"><i class="sbtn lt"><svg><use href="#chev"/></svg></i><i class="thumb h18"><u></u></i><i class="grow"></i><i class="sbtn rt"><svg><use href="#chev"/></svg></i></div>
<div class="split"><i class="tu"></i><i class="td"></i></div>
<div class="foot">HMI tag parameter</div>
</section>

<section class="edit">
<div class="ph navy"><svg class="clip side"><use href="#clip"/></svg><span>Combined_Put_Get</span><i class="tr"></i><span>HMI_1 [TP1500 Comfort]</span><i class="tr"></i><span>Screens</span><i class="tr"></i><span>Screen_1</span><i class="grow"></i><svg class="wbi"><use href="#wmin"/></svg><svg class="wbi"><use href="#wres"/></svg><svg class="wbi"><use href="#wmax"/></svg><svg class="wbi"><use href="#wx"/></svg></div>
<div class="tabs"></div>
<div class="tb ed">
<span class="combo c112">Tahoma<svg><use href="#list"/></svg></span><span class="combo c38">17<i class="cb"></i></span>
<span class="g24 bo">B</span><span class="g24 it">I</span><span class="g24 un">U</span><span class="g24 st">S</span><span class="g20">A<sup>▴</sup></span><svg class="s12"><use href="#dd"/></svg><svg class="s24"><use href="#alignl"/></svg><svg class="s12"><use href="#dd"/></svg><i class="sep"></i>
<span class="g24 ac bo">A</span><svg class="s12"><use href="#dd"/></svg><svg class="s24"><use href="#fill"/></svg><svg class="s12"><use href="#dd"/></svg><svg class="s24"><use href="#brush"/></svg><svg class="s12"><use href="#dd"/></svg><i class="sep"></i>
<svg class="s24"><use href="#lines"/></svg><svg class="s12"><use href="#dd"/></svg><svg class="s24"><use href="#line1"/></svg><svg class="s12"><use href="#dd"/></svg><i class="sep"></i>
<svg class="s24"><use href="#sq2"/></svg><svg class="s12"><use href="#dd"/></svg><svg class="s22"><use href="#rot"/></svg><svg class="s12"><use href="#dd"/></svg><svg class="s24"><use href="#alc"/></svg><svg class="s12"><use href="#dd"/></svg><svg class="s22"><use href="#dist"/></svg><svg class="s12 dim"><use href="#dd"/></svg><svg class="s24"><use href="#samew"/></svg><svg class="s12 dim"><use href="#dd"/></svg><i class="sep"></i>
<svg class="s22"><use href="#pbrush"/></svg><svg class="s24"><use href="#layer"/></svg><svg class="s12"><use href="#dd"/></svg><svg class="s24"><use href="#zoomsel"/></svg>
</div>
<div class="stagew">
<div class="stage">
<div class="device"></div><div class="bezel"></div>
<div class="logo">SIEMENS</div><div class="simatic">SIMATIC HMI</div>
<div class="touch"><span>TOUCH</span></div>
<div class="scr">
<div class="banner"><span class="tem">Temasek</span><span class="poly">POLYTECHNIC</span><span class="thum">Thum Wei Aun Marcus</span><span class="sie">SIEMENS</span><span class="sih">SIMATIC HMI</span></div>
<div class="stations">
<div class="stn s1"><h4>Distribution Station Panel</h4><div class="occ">Occupied</div><div class="lamp"></div><div class="btn b1 picked">Stop<i></i><i></i><i></i><i></i><i></i><i></i><i></i><i></i></div><div class="btn b2">Reset</div><div class="btn b3">Start</div><div class="am">Auto/Manual</div><div class="tog"><i></i><span>OFF</span></div><h4 class="info">Distribution Station Information</h4></div>
<div class="stn s2"><h4>Measuring Station Panel</h4><div class="occ">Occupied</div><div class="lamp"></div><div class="btn b1">Stop</div><div class="btn b2">Reset</div><div class="btn b3">Start</div><div class="am">Auto/Manual</div><div class="tog"><i></i><span>OFF</span></div><h4 class="info">Measuring Station Information</h4><div class="cutt">Amount</div><div class="field"></div></div>
<div class="stn s3"><h4>Sorting Station Panel</h4><div class="occ">Occupied</div><div class="lamp"></div><div class="btn b1">Stop</div><div class="btn b2">Reset</div><div class="btn b3">Start</div><div class="am">Auto/Manual</div><div class="tog"><i></i><span>OFF</span></div><h4 class="info">Sorting Station Information</h4><div class="cutt">Black</div><div class="field dk"></div></div>
</div></div>
</div>
<div class="vs"><i class="sbtn up"><svg><use href="#chev"/></svg></i><i class="thumb t188"><u></u></i><i class="grow"></i><i class="sbtn"><svg><use href="#chev"/></svg></i></div>
</div>
<div class="hs"><i class="sbtn lt"><svg><use href="#chev"/></svg></i><i class="thumb h790"><u></u></i><i class="sbtn rt"><svg><use href="#chev"/></svg></i><span class="combo c156">70%<i class="cb"></i></span><svg class="slider" viewBox="0 0 68 18"><path d="M0 8.500h68" stroke="#555"/><path d="M1 16h67" stroke="#333" stroke-width="3" stroke-dasharray="1 4.500"/><path d="M15 4.500h7v7l-3.500 3-3.500-3z" fill="#ddd" stroke="#777"/></svg><svg class="nav2" viewBox="0 0 16 16"><path d="M.5 .5h15v15H.5z" fill="#fff" stroke="#102080"/><path d="M1 4h8v8H1z" fill="#5070f0" stroke="#1020a0"/></svg></div>
</section>

<section class="props">
<div class="pph"><span class="pt">Button_7 [Button]</span><span class="ptab on w111"><svg><use href="#propi"/></svg>Properties</span><span class="ptab w76"><svg><use href="#info"/></svg>Info<em>i</em></span><span class="ptab w120"><svg><use href="#diag"/></svg>Diagnostics</span><span class="pic"><svg><use href="#wres"/></svg><svg viewBox="0 0 12 12"><path d="M.5 .5h11v11H.5zM0 3.500h12M0 6h12" fill="none" stroke="#e4e4e4"/></svg><i class="td w"></i></span></div>
<div class="tabs ptabs"><span class="tab w99">Properties</span><span class="tab w107">Animations</span><span class="tab on w75">Events</span><span class="tab blue w66">Texts</span></div>
<div class="pbody">
<div class="evs"><div class="evp"></div><div class="ev"><span class="pick">Click</span></div>
<div class="ev bl"><svg viewBox="0 0 13 16"><path d="M0 0h13v7H0z" fill="#b040e0"/><path d="M.5 7.500h12v8H.5z" fill="#fff" stroke="#401080"/><text x="2" y="6" class="t7 bo" fill="#fff">f()</text><text x="2.500" y="14.300" class="t7 bo" fill="#101040">101</text></svg>Press</div>
<div class="ev bl"><svg viewBox="0 0 13 16"><path d="M0 0h13v7H0z" fill="#b040e0"/><path d="M.5 7.500h12v8H.5z" fill="#fff" stroke="#401080"/><text x="2" y="6" class="t7 bo" fill="#fff">f()</text><text x="2.500" y="14.300" class="t7 bo" fill="#101040">101</text></svg>Release</div>
<div class="ev">Activate</div><div class="ev">Deactivate</div><div class="ev">Change</div><div class="evfill"></div></div>
<div class="vsplit"><i></i><i></i></div>
<div class="fn">
<div class="tb fnb"><svg class="s24"><use href="#mup"/></svg><svg class="s24"><use href="#mdn"/></svg><i class="sep"></i><svg class="s24"><use href="#grp"/></svg><svg class="s24"><use href="#ugrp"/></svg><i class="sep"></i><svg class="s24"><use href="#xx"/></svg></div>
<div class="fth"><i></i><i></i><i></i><i></i></div>
<div class="frows"><i class="fgut"></i><span>&lt;Add function&gt;</span><i class="fl"></i></div>
<div class="hs fhs"><i class="gut"></i><i class="sbtn lt"><svg><use href="#chev"/></svg></i><i class="thumb grow"><u></u></i><i class="sbtn rt"><svg><use href="#chev"/></svg></i></div>
</div></div>
</section>

<section class="box">
<div class="ph"><span>Toolbox</span><svg class="sm"><use href="#wres"/></svg><svg class="sm"><use href="#cols"/></svg><i class="tr"></i></div>
<div class="opt">Options</div>
<div class="tb tbx"><svg class="s24"><use href="#arrow"/></svg><svg class="s24"><use href="#stamp"/></svg><svg class="s24"><use href="#settings"/></svg><svg class="s24"><use href="#table"/></svg><span class="combo c120">Dark default value<i class="cb"></i></span><i class="grow"></i><svg class="s24"><use href="#win"/></svg></div>
<div class="sec"><i><svg><use href="#chev"/></svg></i><b>Basic objects</b></div>
<div class="pal"><svg><use href="#t-line"/></svg><svg><use href="#t-poly"/></svg><svg><use href="#t-pgon"/></svg><svg><use href="#t-ell"/></svg><svg><use href="#t-circ"/></svg><svg><use href="#t-rect"/></svg><svg><use href="#t-A"/></svg><svg><use href="#t-pic"/></svg></div>
<div class="sec"><i><svg><use href="#chev"/></svg></i><b>Elements</b></div>
<div class="pal"><svg><use href="#t-io"/></svg><svg><use href="#t-btn"/></svg><svg><use href="#t-sym"/></svg><svg><use href="#t-gio"/></svg><svg viewBox="0 0 28 28"><path d="M11.500 6.500h16v19h-16z" fill="url(#gd)" stroke="#a0b0e8"/><path d="M11 6h17v4H11z" fill="#2c48e8"/><path d="M11 26h17" stroke="#2030b0" stroke-width="2"/><text x="16" y="23" class="t13 bo">5</text><circle cx="7" cy="7" r="6.500" fill="#f4f8ff" stroke="#7080c8"/><path d="M7 3v5h4" fill="none" stroke="#000040" stroke-width="1.400"/></svg><svg><use href="#t-bar"/></svg><svg><use href="#t-sw"/></svg><svg><use href="#t-lib"/></svg><svg><use href="#t-sl"/></svg><svg><use href="#t-gau"/></svg><svg><use href="#t-clk"/></svg></div>
<div class="sec"><i><svg><use href="#chev"/></svg></i><b>Controls</b></div>
<div class="pal"><svg><use href="#t-alm"/></svg><svg><use href="#t-trend"/></svg><svg><use href="#t-usr"/></svg><svg><use href="#t-web"/></svg><svg><use href="#t-watch"/></svg><svg><use href="#t-sat"/></svg><svg><use href="#t-rcp"/></svg><svg viewBox="0 0 28 28"><use href="#t-trend"/><text x="6.500" y="9" class="t9 bo">y</text><text x="19" y="20" class="t9 bo">x</text></svg><svg><use href="#t-diag"/></svg><svg><use href="#t-media"/></svg><svg><use href="#t-sys"/></svg><svg><use href="#t-graph"/></svg><svg><use href="#t-smart"/></svg><svg><use href="#t-recv"/></svg><svg><use href="#t-cam"/></svg><svg viewBox="0 0 28 28"><use href="#t-frame"/><path d="M0 1h28v12H0z" fill="#d81818"/><text x="2" y="11" class="t10 bo" fill="#fff">PDF</text></svg></div>
<div class="sec"><i><svg><use href="#chev"/></svg></i><b>Graphics</b></div>
<div class="tb gtb"><svg class="s24" viewBox="0 0 16 16"><use href="#folder"/><use href="#star" x="7" y="0" width="9" height="9"/><path d="M0 15l4-4M1 11h3v3" stroke="#101040" fill="none" stroke-width="1.500"/></svg><svg class="s24" viewBox="0 0 16 16"><path d="M.5 13.500v-12h4l1.500 2h8v10z" fill="#e4e4e4" stroke="#aaa"/><path d="M8 8l7 7M15 8l-7 7M0 15l4-4M1 11h3v3" stroke="#444" fill="none" stroke-width="1.600"/></svg></div>
<div class="gl">
<div class="gr"><i class="tw r"></i><svg viewBox="0 0 16 16"><use href="#folder"/><path d="M9 7h7v6H9z" fill="#4c5c78"/><path d="M0 15l4-4M1 11h3v3" stroke="#101040" fill="none" stroke-width="1.500"/></svg><span class="pk">WinCC graphics folder</span></div>
<div class="gr"><i class="tw"></i><svg viewBox="0 0 16 16"><use href="#folder"/><circle cx="13" cy="3" r="2" fill="#e8c8a0"/><path d="M10 5h6v9h-5z" fill="#1c4c80"/><path d="M0 15l4-4M1 11h3v3" stroke="#101040" fill="none" stroke-width="1.500"/></svg><span>My graphics folder</span></div>
</div>
<div class="split"><i class="tu"></i><i class="td"></i></div>
<div class="grow"></div>
</section>

<aside class="rail">
<div class="rt1 on"><svg viewBox="0 0 16 16"><circle cx="9.500" cy="6" r="6" fill="url(#gb)"/><text x="0" y="15" class="t13" fill="#000040">A</text></svg>Toolbox</div>
<div class="rt2"><svg viewBox="0 0 16 16"><path d="M8 0h8v4H8z" fill="#2090c0"/><path d="M0 11h8v4H0z" fill="#d030d8"/><path d="M3 9q0-4 4-3t5 0V4" fill="none" stroke="#101040" stroke-width="1.500"/></svg>Animations</div>
<div class="rt3"><svg viewBox="0 0 16 16"><path d="M2 1h14M2 4h14M2 7h14" stroke="#303868" stroke-dasharray="1.500 1.500"/><path d="M0 8l4-3h8l-2 4H0zM0 12l4-3h8l-2 4H0z" fill="#f0c050" stroke="#a87818"/></svg>Layout</div>
<div class="rt4"><svg viewBox="0 0 16 16"><path d="M.5 6.500h10v9H.5z" fill="#eef" stroke="#4060b0"/><path d="M7 0v10M2 5h10M4 2l7 7M10 2L4 8" stroke="#d020b0"/><path d="M9 8l6 6" stroke="#334" stroke-width="2"/><text x="2" y="14" class="t7 bo">DI</text></svg>Instructions</div>
<div class="rt5"><svg viewBox="0 0 16 16"><path d="M1.500 1.500h10v13h-10z" fill="#fff" stroke="#666"/><path d="M4 5h6M4 8h6M4 11h4" stroke="#223"/><path d="M6 10l3 4 6-8" fill="none" stroke="#18a030" stroke-width="2.500"/></svg>Tasks</div>
<div class="rt6"><svg viewBox="0 0 16 16"><path d="M.5 2.500h6l1.500 1 1.500-1h6v11H.5zM8 3v11" fill="#eef2ff" stroke="#2030a0" stroke-width="1.300"/></svg>Libraries</div>
</aside>
</main>

<footer class="bar">
<span class="pv"><i class="tl"></i><b>Portal view</b></span>
<span class="ft"><svg><use href="#over"/></svg>Overview</span><span class="ft"><svg><use href="#deftag"/></svg>Default tag t...</span><span class="ft on"><svg><use href="#scrd"/></svg>Screen_1</span><span class="ft"><svg><use href="#conn"/></svg>Connections</span>
<i class="grow"></i><svg class="ti" viewBox="0 0 20 20"><path d="M0 0h20v20H0z" fill="#d0d0d0"/><path d="M4 3h8v10H4zM6 5h4M6 8h4" fill="#fff" stroke="#555"/><path d="M4 13h13v4H4z" fill="#223"/><path d="M15 11V3M13 5l2-2 2 2" stroke="#111" fill="none"/></svg>
<span class="msg"><svg viewBox="0 0 14 14"><circle cx="7" cy="7" r="7" fill="#1414f0"/><path d="M3 7l3 3.500L11 4" fill="none" stroke="#fff" stroke-width="2"/></svg>Project Combined_Put_Get opened.</span>
</footer>
<footer class="os">
<svg class="o1" viewBox="0 0 16 16"><path d="M0 2.200L6.500 1.300v6.200H0zM7.500 1.200L16 0v7.500H7.500zM0 8.500h6.500v6.200L0 13.800zM7.500 8.500H16V16l-8.500-1.200z" fill="#fff"/></svg>
<svg class="o2" viewBox="0 0 16 16"><circle cx="10" cy="6" r="5" fill="none" stroke="#fff" stroke-width="1.300"/><path d="M6.500 9.500L.5 15.500" stroke="#fff" stroke-width="1.300"/></svg>
<svg class="o3" viewBox="0 0 20 16"><path d="M4.500 1.500h11v13h-11zM2.500 3H.5v10h2M17.500 3h2v10h-2" fill="none" stroke="#fff"/></svg>
<span class="o4"><svg viewBox="0 0 22 18"><path d="M0 1h8l2 2h12v15H0z" fill="#f8cc50"/><path d="M0 5h22v4H0z" fill="#fce8a0"/><path d="M5 11h12v7h-3v-4H8v4H5z" fill="#38a8e8"/></svg></span>
<span class="o5"><svg viewBox="0 0 24 24"><text x="0" y="11.500" class="t14" fill="#fff" textLength="23" lengthAdjust="spacingAndGlyphs">TIA</text><text x="0" y="23.500" class="t14" fill="#9aa4d0" textLength="24" lengthAdjust="spacingAndGlyphs">V15.1</text></svg></span>
<i class="grow"></i>
<svg class="tr1" viewBox="0 0 16 16"><path d="M5.500 1.500h4v3h-4zM4 4.500h7v10H4z" fill="none" stroke="#ddd"/></svg>
<svg class="tr1" viewBox="0 0 16 16"><path d="M0 0h16v16H0z" fill="#30385c"/><text x="0" y="7.500" class="t7 bo" fill="#fff" textLength="16" lengthAdjust="spacingAndGlyphs">UCEB</text><text x="3" y="15" class="t7" fill="#9ac">MU</text></svg>
<svg class="tr1" viewBox="0 0 16 16"><rect width="16" height="16" rx="4" fill="#2090d0"/><path d="M3 6h10M3 9h10M4 12h8" stroke="#d8f0ff"/></svg>
<svg class="tr1" viewBox="0 0 16 16"><path d="M0 0h16v16H0z" fill="#405058"/><text x="0" y="7" class="t7 bo" fill="#fff" textLength="16" lengthAdjust="spacingAndGlyphs">DIAG</text><path d="M3 10l4 4 7-8" fill="none" stroke="#20d040" stroke-width="2.500"/></svg>
<svg class="tr1" viewBox="0 0 16 16"><path d="M8 0l6 2v6q0 5-6 8-6-3-6-8V2z" fill="#fff"/><path d="M8 1v14M2 7.500h12" stroke="#222"/></svg>
<svg class="tr1" viewBox="0 0 16 16"><path d="M3.500 1.500h12v9h-12zM.5 2v12" fill="none" stroke="#fff"/><path d="M10 6l6 10H4z" fill="#f8c020"/><path d="M10 10v3" stroke="#000"/></svg>
<svg class="tr1" viewBox="0 0 16 16"><path d="M1 5.500h3l4-4v13l-4-4H1z" fill="none" stroke="#fff"/><path d="M11 6l4 4M15 6l-4 4" stroke="#fff"/></svg>
<span class="clk">10:40 AM<br>27/7/2020</span>
<svg class="act" viewBox="0 0 16 16"><path d="M.5 1.500h15v10H11l-3 3v-3H.5z" fill="none" stroke="#fff"/></svg>
</footer>
</body>
</html>
```
FILE: styles.css
```css
*{box-sizing:border-box}
body{margin:0;width:1920px;height:1080px;overflow:hidden;background:#1b2133;font:12px/19px "Noto Sans","Open Sans",sans-serif;color:#111;display:grid;grid-template-rows:23px 50px 938px 29px 40px}
.defs{position:absolute}
i{font-style:normal;display:block}
svg{flex:none;display:block}
.t6{font-size:6px}.t7{font-size:7px}.t8{font-size:8px}.t9{font-size:9px}.t10{font-size:10px}.t13{font-size:13px}.t14{font-size:14px}
.bo{font-weight:700}
.grow{flex:1 1 0}
.dis{color:#7b7b7b}.dim{color:#777}

.title{background:linear-gradient(#888 0,#555 6px,#1d1d1d 7px);color:#fff;display:flex;align-items:center;padding:2px 4px 0 6px;font-size:13px}
.title .ic{width:16px;height:16px;margin-right:6px}
.title b{font-weight:600;letter-spacing:-.33px;margin-top:-1px}
.wb{margin-left:auto;display:flex;gap:8px;margin-bottom:4px}
.wb svg{width:9px;height:9px}

.head{background:#cbcbcb;display:flex;justify-content:space-between}
.menu{display:flex;gap:17px;padding:4px 0 0 12px;height:25px;font-size:11.800px;letter-spacing:-.1px}
.tb{display:flex;align-items:center;height:27px;background:#e9e9e9;flex:none}
.tb svg{height:16px}
.tb.main{background:none;height:24px;padding-left:9px;font-size:12px;letter-spacing:-.3px;white-space:nowrap}
.s12{width:12px}.s14{width:14px}.s20{width:20px}.s22{width:22px}.s24{width:24px}.s26{width:26px}.s28{width:28px}.s36{width:36px}
.tb .s12,.tb .s14{height:12px}
.flip{transform:scaleX(-1)}
.w74{width:74px;padding-left:4px}.w58{width:57px}.w66{width:67px;padding-left:4px}
.sep{width:1px;height:23px;border-left:1px dotted #777;margin:0 2px}
.boxed{width:22px;height:22px!important;border:1px solid #2f62d8;padding:2px;background:#f4f6fc;margin:0 2px 0 2px}
.bx2{margin:0 1px 0 0}
.search{width:119px;height:17px;line-height:15px;background:#f2f2f2;border:1px solid #888;color:#666;padding-left:3px;margin:0 6px;font-size:11.500px;letter-spacing:-.2px}
.brand{width:290px;padding:13px 47px 0 0;font-size:14px;text-align:right;line-height:16px;white-space:nowrap}
.brand b{display:block;font-size:17px;color:#6a6a6a;line-height:14px;margin-right:-23px;font-weight:600}

.work{display:grid;grid-template-columns:24px 264px 213px 1108px 286px 25px;grid-template-rows:508px 426px;row-gap:3px;padding-top:1px;height:938px}
.vis{grid-row:1/3;background:#b0b0b0;border-right:1px solid #1b2133;padding-top:24px}
.vis div{height:221px;border-top:1px solid #fff;border-bottom:1px solid #fff;writing-mode:vertical-rl;transform:rotate(180deg);color:#fff;font:600 13px/22px "Noto Sans";letter-spacing:.2px;padding-top:66px}
.left{grid-row:1/3;display:flex;flex-direction:column;overflow:hidden}
.ph{height:27px;flex:none;background:#b0b0b0;border-bottom:3px solid #ececec;color:#fff;font-size:13.500px;font-weight:500;display:flex;align-items:center;padding:0 5px}
.ph span{flex:1}
.sm{width:12px;height:12px;margin-left:7px}
.tl,.tr{width:0;height:0;border:5px solid transparent}
.tl{border-right:6px solid #fff;border-left:0;margin-left:8px}
.tr{border-left:6px solid #fff;border-right:0;margin-left:8px}
.ph .tl,.ph .tr{border-top-width:6px;border-bottom-width:6px}
.left .ph .tl{margin:0 3px 0 11px}
.box .ph .tr{margin:0 3px 0 9px}
.tabs{height:25px;flex:none;background:#cbcbcb;border-bottom:1px solid #777;display:flex;padding-left:6px;align-items:flex-end}
.tab{height:22px;border:1px solid #777;border-bottom:0;background:linear-gradient(#ececec,#cfcfcf);font:500 13px/20px "Noto Sans";color:#555;display:flex;align-items:center;justify-content:center;padding-bottom:1px}
.tab.on{background:linear-gradient(#fbfbfb,#e9e9e9);color:#000;margin-bottom:-1px;height:23px;font-weight:600;letter-spacing:-.2px;padding-bottom:3px}
.dv{width:83px;padding-right:10px}
.gap{height:21px;flex:none;background:#c2c2c2}
.treew{display:flex;height:596px;flex:none;background:#c4c4c4;overflow:hidden}
.tree{width:245px;height:596px;overflow:hidden}
.row{height:19px;line-height:17px;white-space:nowrap;display:flex;align-items:center;background:linear-gradient(#c6c6c6,#c6c6c6) 225px 0/1px 100% no-repeat #efefef;border-bottom:1px solid #fff;padding-bottom:1px;letter-spacing:-.12px}
.row svg{width:16px;height:16px;margin:0 4px 0 1px}
.row.g{background-color:#e0e0e0}
.row.b{font-weight:600;letter-spacing:-.4px}
.row.sel{background-color:#d5dbe1;position:relative}
.row.sel:after{content:"";position:absolute;left:0;top:0;width:226px;height:18px;border:1px dashed #888}
.l1{padding-left:18px}.l2{padding-left:36px}.l3{padding-left:54px}
.tw{width:18px;height:9px;flex:none}
.tw.r:after,.tw.d:after{content:"";display:block;width:0;height:0;margin:0 0 0 7px;border:4.500px solid transparent;border-left:5px solid #000;border-right:0}
.tw.d:after{border:4px solid transparent;border-top:5px solid #000;border-bottom:0;margin:2px 0 0 5px}
.vs{width:18px;margin-left:auto;background:#c4c4c4;display:flex;flex-direction:column}
.sbtn{width:18px;height:18px;flex:none;border:1px solid #888;background:linear-gradient(90deg,#fff,#dcdcdc);box-shadow:inset 0 0 0 1px #fff;color:#555;display:grid;place-items:center}
.sbtn svg{width:12px;height:12px}
.up svg{transform:rotate(180deg)}.lt svg{transform:rotate(90deg)}.rt svg{transform:rotate(-90deg)}
.thumb{width:18px;border:1px solid #888;box-shadow:inset 0 0 0 1px #fff;background:linear-gradient(90deg,#efefef,#d4d4d4);display:grid;place-items:center;margin-top:1px;flex:none}
.thumb u{width:8px;height:8px;background:repeating-linear-gradient(#555 0 1px,transparent 1px 2.400px)}
.t265{height:265px}.t112{height:112px}.t188{height:188px}
.hs{display:flex;height:18px;flex:none}
.hs .thumb{height:18px;margin:0 0 0 1px;background:linear-gradient(#efefef,#d0d0d0)}
.hs .thumb u{background:repeating-linear-gradient(90deg,#555 0 1px,transparent 1px 2.400px)}
.h18{width:18px}.hs .h790{width:789px;margin-right:2px}
.hs .thumb.grow{flex:1;width:auto;margin-right:2px}
.sec{height:24px;flex:none;border-top:3px solid #999;border-bottom:1px solid #777;background:linear-gradient(#f0f0f0 0,#e2e2e2 50%,#d4d4d4 50%,#dcdcdc);display:flex;align-items:center}
.sec.first{border-top:3px solid #1b2133}
.sec i{width:21px;height:100%;border-right:1px solid #777;display:grid;place-items:center;color:#000}
.sec svg{width:13px;height:13px}
.sec b{font:600 13.300px/18px "Noto Sans";padding-left:5px}
.dgap{height:24px;flex:none;background:#cbcbcb;border-bottom:1px solid #777}
.dtb{height:28px;flex:none;background:#e9e9e9}
.thead{height:20px;flex:none;background:linear-gradient(#e9e9e9 45%,#cdcdcd 50%,#e0e0e0);border:1px solid #aaa;border-width:1px 0;display:grid;grid-template-columns:18px 160px 1fr;font-size:11.500px;line-height:17px}
.thead span+span{border-left:1px solid #aaa;padding-left:3px}
.lined{background:repeating-linear-gradient(#efefef 0 18px,#fff 18px 19px)}

.tagp{margin:0 0 0 3px;width:210px;display:flex;flex-direction:column;background:#c9c9c9}
.ph .clip{width:16px;height:16px;margin-left:-1px}
.ph .ell{padding-left:11px}
.wbi{width:11px;height:12px;margin-left:7px}
.tg{width:101px;margin-left:52px;font-size:13.300px!important;justify-content:flex-start!important;padding-left:2px}
.tg svg{width:16px;height:16px;margin-right:2px}
.nav{width:22px;height:22px;border:1px solid #888;border-bottom:0;margin-left:7px;background:#e4e4e4;display:grid;place-items:center}
.nav.last{margin-left:0}
.nav .tl,.nav .tr{margin:0;border-left-color:#555;border-right-color:#777}
.nav .tl{border-left-color:transparent}.nav .tr{border-right-color:transparent}
.dtt{height:20px;flex:none;background:#d9d9d9;font:600 13px/19px "Noto Sans";padding-left:25px;letter-spacing:.1px}
.tgrid{display:grid;grid-template-columns:24px 18px 149px 19px;grid-template-rows:20px 343px;border-top:1px solid #aaa}
.th{background:linear-gradient(#dedede 40%,#c4c4c4 50%,#d8d8d8);border-bottom:1px solid #aaa}
.nm,.th.bl:nth-child(2){background:linear-gradient(#e4e8ec 40%,#ccd4dc 50%,#d8e0e8)}
.bl{border-left:1px solid #aaa}
.nm{font-size:11.500px;padding-left:4px;display:flex;gap:8px;line-height:17px}
.asc{border:4px solid transparent;border-bottom:5px solid #000;border-top:0;height:0;margin-top:7px}
.tags{grid-column:1/4;background:#efefef}
.tr0{display:flex;height:19px;line-height:18px;border-bottom:1px solid #fff;background:#efefef;white-space:nowrap;letter-spacing:-.18px}
.tr0 i{width:24px;background:#cbcbcb}
.tr0 svg{width:18px;height:18px;padding:1px 0 0 1px;border-right:1px solid #ddd}
.tr0 span{padding-left:24px;overflow:hidden}
.hl0{background:#d5dbe1}.hl0 i{background:#bec8d2}
.ths{padding-left:24px;padding-right:18px;background:#c4c4c4;height:19px;padding-top:1px}
.split{height:7px;flex:none;margin:0;border:1px solid #888;border-width:1px 0;background:#dcdcdc;display:flex;justify-content:center;gap:10px}
.split i{width:23px;background:#aaa;position:relative}
.split i:after{content:"";position:absolute;left:8px;top:1px;border:4px solid transparent;border-bottom:4px solid #222;border-top:0}
.split .td:after{border-top:4px solid #222;border-bottom:0}
.foot{background:#acacac;color:#fff;font-weight:600;font-size:11.500px;text-align:center;flex:1;padding-right:2px}

.edit{margin-left:3px;width:1105px;display:flex;flex-direction:column}
.navy{background:#2e374f}
.navy span{flex:none;font-size:13.800px;letter-spacing:-.12px}
.navy .side{transform:rotate(-90deg);margin:0 10px 0 -1px}
.navy .tr{border-width:4px 0 4px 5px!important;margin:0 11px 0 10px}
.tb.ed{padding-left:4px;border-bottom:1px solid #777;height:28px;margin-bottom:-1px}
.combo{height:19px;border:1px solid #888;background:#fff;display:flex;align-items:center;justify-content:space-between;padding-left:2px;font-size:11.800px;white-space:nowrap;overflow:hidden}
.combo svg{width:16px;height:15px!important}
.cb{width:15px;height:17px;border-left:1px solid #888;background:linear-gradient(#f4f4f4,#ccc);display:grid;place-items:center}
.cb:after{content:"";border:4px solid transparent;border-top:5px solid #000;border-bottom:0}
.c112{width:112px;margin-right:8px}.c38{width:38px;margin-right:5px}
.c156{width:156px;margin-left:6px}.c120{width:120px;padding-left:5px;margin-left:3px}
.g24,.g20{width:24px;text-align:center;color:#000040;font-size:15px;font-family:"Noto Sans";margin-top:-2px}
.g20{width:22px}.g20 sup{font-size:9px;line-height:0}
.it{font-family:"Liberation Serif";font-style:italic;font-size:17px}.un{text-decoration:underline}.st{text-decoration:line-through}
.ac{border-bottom:3px solid #000;width:16px;height:18px;line-height:14px;margin:0 4px}
.stagew{height:410px;display:flex}
.stage{width:1088px;height:410px;background:#707070;position:relative;overflow:hidden}
.device{position:absolute;left:29px;top:0;width:1031px;height:410px;background:#72879b}
.bezel{position:absolute;left:51px;top:0;width:987px;height:410px;background:#000}
.logo{position:absolute;left:98px;top:19px;width:93px;height:25px;background:#008080;color:#fff;font:800 18px/24px "Open Sans";text-align:center}
.simatic{position:absolute;right:94px;top:18px;color:#eee;font:300 21.600px/26px "Open Sans"}
.touch{position:absolute;left:993px;top:99px;width:45px;height:154px;background:#72879b;writing-mode:vertical-rl;overflow:hidden}
.touch span{display:block;font:400 59px/45px "Roboto";transform-origin:0 0;transform:scale(1,.775);margin-top:4px;color:#000;height:190px}
.scr{position:absolute;left:97px;top:99px;width:896px;height:311px;overflow:hidden;background:#b9f9f8}
.banner{height:41px;background:#fff;position:relative;font-family:"DejaVu Sans Condensed","DejaVu Sans";font-stretch:condensed;white-space:nowrap}
.banner span{position:absolute}
.tem{left:6px;top:1px;font-size:27px;line-height:30px;color:#f00;letter-spacing:-1px}
.poly{left:32px;top:25px;font-size:12.500px;line-height:15px;color:#3a3a52;letter-spacing:-.15px}
.thum{left:336px;top:7px;font-size:26px;line-height:30px;letter-spacing:-.52px;color:#000}
.sie{left:827px;top:4px;font:800 12.800px/15px "Open Sans";letter-spacing:.1px;color:#009999}
.sih{left:827px;top:22px;font:400 10px/15px "Open Sans";color:#222}
.stations{display:grid;grid-template-columns:298px 298px 300px;height:270px}
.stn{position:relative;border-left:1px solid #2a9a9a;border-top:1px solid #6fd0d0;font-family:"DejaVu Sans Condensed","DejaVu Sans";font-stretch:condensed}
.s3{border-right:1px solid #2a9a9a}
.stn h4{margin:0;height:19px;background:#008080;color:#fff;font-size:12.300px;font-weight:700;line-height:19px;text-align:center;letter-spacing:-.2px;outline:1px solid #6fd0d0}
.stn .info{position:absolute;left:0;right:0;top:223px;height:20px;border-top:1px solid #6fd0d0}
.s1 .info{padding-top:1px}
.stn>div{position:absolute}
.occ{left:var(--o);top:39px;font-weight:700;font-size:17.300px;line-height:20px;color:#32324c;letter-spacing:-.1px}
.lamp{left:calc(var(--o) + 20px);top:64px;width:46px;height:45px;border-radius:50%;background:#d9d9d9;border:1px solid #32324c}
.s1 .lamp{left:60px}
.s1{--o:39px;--b:170px;--t:37px;--f:0px}.s2{--o:42px;--b:173px;--t:38px;--f:178px}.s3{--o:33px;--b:157px;--t:30px;--f:155px}
.s2 .lamp{left:61px}.s3 .lamp{left:53px}
.btn{left:var(--b);width:104px;height:42px;background:linear-gradient(#81828c,#63636f 30%,#575763);border:1px solid #474753;border-radius:2px;color:#fff;font-weight:700;font-size:12px;text-align:center;line-height:42px;letter-spacing:-.15px}
.b1{top:38px}.b2{top:92px}.b3{top:150px}
.s1 .b1{top:37px}.s1 .b3{top:149px}
.picked i{position:absolute;width:6px;height:6px;background:#c4e8ff;border:1px solid #2c60d0}
.picked i:nth-child(1){left:-1px;top:-1px}.picked i:nth-child(2){left:48px;top:-1px}.picked i:nth-child(3){right:-1px;top:-1px}.picked i:nth-child(4){left:-1px;top:17px}.picked i:nth-child(5){right:-1px;top:17px}.picked i:nth-child(6){left:-1px;bottom:-1px}.picked i:nth-child(7){left:48px;bottom:-1px}.picked i:nth-child(8){right:-1px;bottom:-1px}
.am{left:calc(var(--t) + 9px);top:147px;font-weight:700;font-size:11.500px;line-height:15px;color:#55555f}
.s1 .am{top:148px}
.tog{left:var(--t);top:161px;width:93px;height:31px;border:1px solid #555560;background:#f2f2f4;display:flex;border-radius:2px;font-weight:700;font-size:11.500px;line-height:30px;color:#55555f}
.tog i{width:46px;background:linear-gradient(#72727e,#5a5a66);display:grid;place-items:center}
.tog i:after{content:"";width:14px;height:9px;background:repeating-linear-gradient(90deg,#44444f 0 1px,transparent 1px 5px)}
.tog span{flex:1;text-align:center}
.cutt{left:calc(var(--f) - 102px);top:265px;font-weight:700;font-size:15px;color:#32324c}
.s3 .cutt{left:71px}
.field{left:var(--f);top:263px;width:67px;height:24px;border:2px solid #55555f;background:#fff}
.dk{background:#ccd4d8;border:3px solid #101830;border-radius:4px;width:52px}
.edit>.hs{background:#ececec;height:19px}
.slider{width:68px;height:18px;margin-left:17px}
.nav2{width:14px;height:14px;margin:1px 0 0 auto}

.props{grid-column:3/5;grid-row:2;margin-left:3px;width:1318px;display:flex;flex-direction:column;background:#e9e9e9}
.pph{height:27px;flex:none;background:#b0b0b0;border-bottom:3px solid #2e374f;display:flex;align-items:flex-end;font-size:13.300px;gap:2px}
.pt{flex:1;color:#fff;padding:0 0 2px 5px;font-size:13.900px}
.ptab{height:21px;background:linear-gradient(#e4e4e4,#cfcfcf);color:#555;display:flex;align-items:center;white-space:nowrap;border:1px solid #888;border-bottom:0;letter-spacing:-.05px;padding-left:2px}
.ptab svg{width:16px;height:16px;margin-right:3px}
.ptab.on{height:24px;margin-bottom:-3px;border:0;border-top:2px solid #2e374f;background:linear-gradient(#fff,#e9e9e9);font-weight:600;font-size:12.800px;color:#000;padding-bottom:3px}
.ptab em{font:700 10px/12px "Noto Sans";width:14px;height:14px;border-radius:50%;background:#f0d800;color:#000;text-align:center;border:1px solid #a08c00;margin-left:10px}
.w111{width:111px}.w76{width:76px}.w120{width:120px}
.pic{width:72px;display:flex;gap:6px;padding:0 0 7px 18px;align-items:center}
.pic svg{width:12px;height:12px}
.td.w{border:6px solid transparent;border-top:7px solid #fff;border-bottom:0;height:0}
.ptabs{gap:2px}
.ptabs .tab{justify-content:flex-start;padding-left:11px;letter-spacing:0;font-size:13.200px}
.ptabs .on{letter-spacing:-.3px}
.w99{width:99px}.w107{width:107px}.w75{width:75px}.w66{width:66px}
.ptabs .blue{color:#2f62d8;font-size:14px}
.pbody{display:flex;flex:1;min-height:0}
.evs{width:173px;display:flex;flex-direction:column;padding:0 1px}
.evp{height:34px;flex:none}
.ev{height:19px;flex:none;border-bottom:1px solid #e7e7e7;background:#efefef;padding-left:36px;line-height:19px;letter-spacing:-.1px}
.ev.bl{border-left:0;font-weight:600;display:flex;padding-left:17px;color:#11e;letter-spacing:-.4px}
.ev svg{width:14px;height:16px;margin:1px 5px 0 0}
.pick{background:#2f62d0;color:#fff;outline:1px dotted #333;display:inline-block;line-height:17px;height:17px}
.evfill{flex:1;background:repeating-linear-gradient(#efefef 0 18px,#e7e7e7 18px 19px)}
.vsplit{width:7px;margin-top:3px;border:1px solid #999;background:#e0e0e0;padding-top:156px}
.vsplit i{height:23px;background:linear-gradient(#999,#e8e8e8);margin-bottom:12px;position:relative}
.vsplit i:after{content:"";position:absolute;top:8px;left:0;border:3px solid transparent;border-right:3px solid #000;border-left:0}
.vsplit i+i:after{border-left:3px solid #000;border-right:0}
.fn{flex:1;padding:0 11px 11px 11px;display:flex;flex-direction:column}
.fnb{height:33px;padding:0 0 3px 0;margin-left:-5px;background:none}
.fth{height:19px;flex:none;border:1px solid #aaa;border-width:1px 0;background:linear-gradient(#e9e9e9 45%,#cdcdcd 50%,#e0e0e0);display:grid;grid-template-columns:23px 537px 538px 1fr}
.fth i{border-right:1px solid #b0b0b0}
.frows{flex:1;display:flex;background:linear-gradient(#fff,#fff) 560px 0/1px 100% no-repeat,linear-gradient(#fff,#fff) 1097px 0/1px 100% no-repeat,repeating-linear-gradient(#efefef 0 18px,#fff 18px 19px)}
.fgut{width:24px;background:repeating-linear-gradient(#cbcbcb 0 18px,#fff 18px 19px);border-right:1px solid #b0b0b0;margin-right:23px}
.frows span{font-size:11.500px;letter-spacing:-.15px;line-height:20px}
.fhs .gut{width:24px;background:#cbcbcb}
.fhs{background:#e0e0e0}

.box{grid-row:1/3;margin-left:3px;width:283px;background:#efefef;display:flex;flex-direction:column}
.opt{height:25px;flex:none;background:linear-gradient(#e9e9e9 4px,#f8f8f8 5px,#dadada);border-bottom:1px solid #777;font:500 13.300px/20px "Noto Sans";padding:3px 5px}
.tbx{padding-left:4px}
.pal{display:grid;grid-template-columns:repeat(6,28px);grid-auto-rows:28px;column-gap:14px;row-gap:8px;padding:6px 6px 0;flex:none;height:150px}
.pal svg{width:28px;height:28px;overflow:visible}
.box .sec b{font-weight:500;font-size:13.500px}
.gtb{padding-left:2px;height:25px;padding-bottom:2px}
.gl{height:101px;background:repeating-linear-gradient(#efefef 0 18px,#fff 18px 19px)}
.gr{height:19px;display:flex;align-items:center;line-height:18px;letter-spacing:-.42px;font-weight:500}
.gr svg{width:16px;height:16px;margin:0 0 0 -1px}
.gr span{padding:0 1px 0 2px;margin-left:1px}
.gr .tw:after{margin-left:7px}
.pk{background:#c2ccd8}
.rail{grid-row:1/3;background:linear-gradient(90deg,#9e9e9e,#b8b8b8);padding-top:30px;padding-right:3px;border-left:1px solid #555;display:flex;flex-direction:column;gap:3px}
.rail div{writing-mode:vertical-rl;border:1px solid #777;background:linear-gradient(90deg,#dcdcdc 50%,#ccc 50%);font:600 13px/19px "Noto Sans";color:#666;display:flex;align-items:center;padding-top:1px;flex:none;letter-spacing:.25px}
.rail .on{background:#f2f2f2;color:#111}
.rail svg{width:16px;height:16px;margin-bottom:4px;writing-mode:horizontal-tb;letter-spacing:0}
.rt1{height:96px}.rt2{height:118px}.rt3{height:88px}.rt4{height:121px}.rt5{height:78px}.rt6{height:99px}

.bar{background:#1c1c1c;display:flex;align-items:center;gap:3px;color:#fff}
.pv{width:178px;display:flex;align-items:center;padding-left:28px;gap:10px}
.pv b{font-weight:600;font-size:13.500px}
.bar .ft{width:113px;height:21px;background:#c4c4c4;color:#111;display:flex;align-items:center;font-size:11.800px;letter-spacing:-.15px;padding-bottom:1px}
.ft svg{width:16px;height:16px;margin:0 5px 0 2px}
.bar .ft.on{background:#fff}
.ti{width:20px;height:20px;margin-right:3px}
.msg{width:330px;height:29px;display:flex;align-items:center;border-left:1px solid #555;padding:2px 0 0 4px;font-size:12px;letter-spacing:-.35px}
.msg svg{width:14px;height:14px;margin:-2px 5px 0 0}
.os{background:linear-gradient(#000 6px,#2a2a2a 6px 8px,#06080a 8px);display:flex;align-items:center;color:#fff}
.o1{width:16px;height:16px;margin:0 32px 0 16px}
.o2{width:16px;height:16px}
.o3{width:20px;height:16px;margin:0 20px 0 30px}
.o4,.o5{height:40px;width:42px;display:grid;place-items:center;border-bottom:2px solid #76b9ed}
.o4 svg{width:22px;height:18px}
.o5{width:48px;background:#3c3e42;margin-left:4px}
.o5 svg{width:24px;height:24px}
.tr1{width:16px;height:16px;margin-right:8px}
.clk{width:76px;text-align:center;font:12px/18px "Open Sans";letter-spacing:-.3px;margin-left:-11px}
.act{width:18px;height:16px;margin:0 24px 0 6px}
```
